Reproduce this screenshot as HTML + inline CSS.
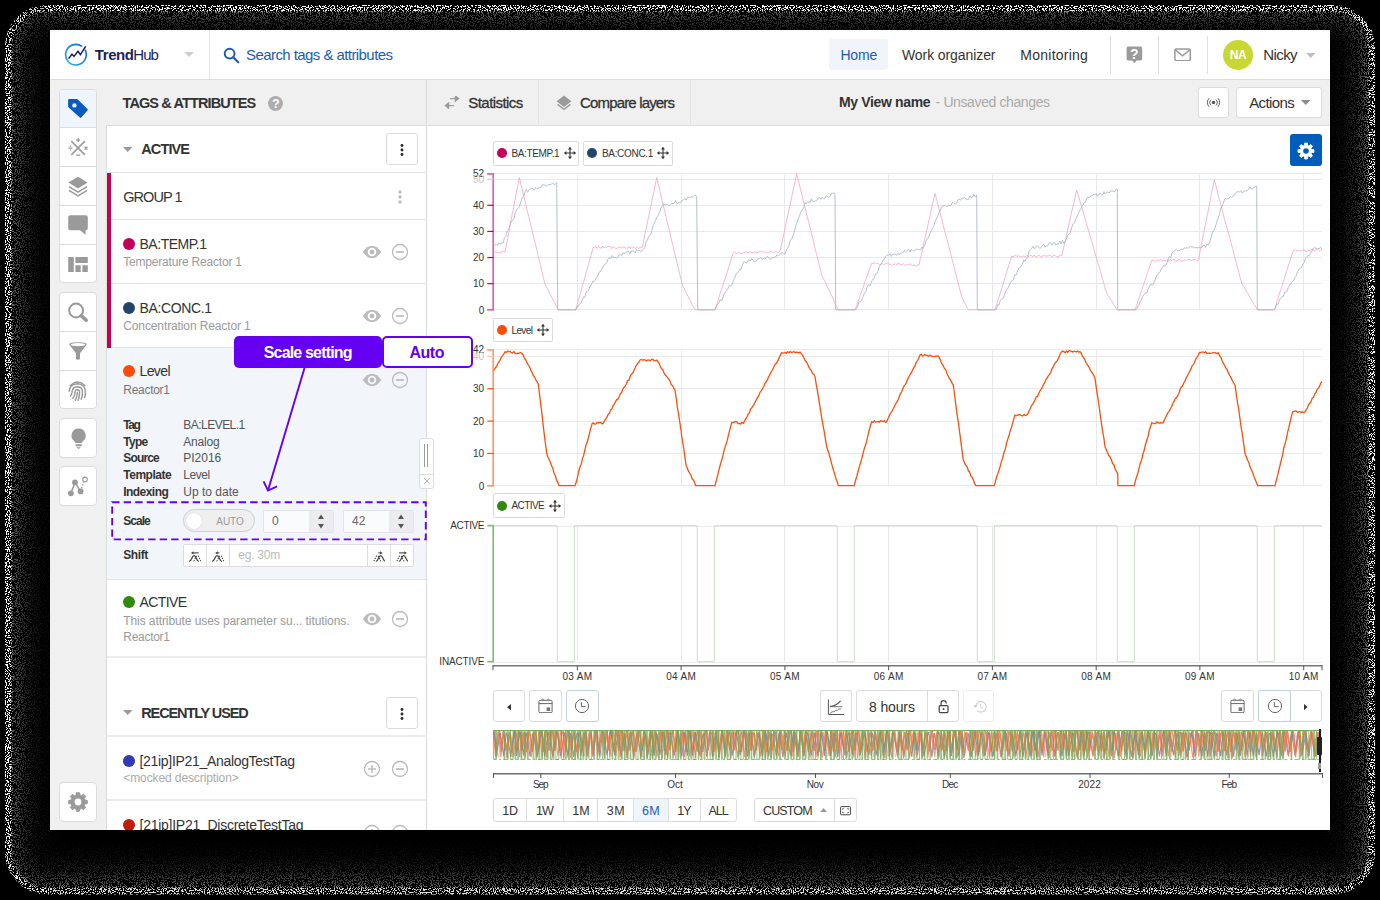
<!DOCTYPE html>
<html><head><meta charset="utf-8"><title>TrendHub</title>
<style>
*{box-sizing:border-box;margin:0;padding:0}
html,body{width:1380px;height:900px;overflow:hidden;background:#000}
body{font-family:"Liberation Sans",sans-serif;position:relative}
.a{position:absolute;display:block}
.t{position:absolute;white-space:nowrap;display:block}
#win{position:absolute;left:50px;top:30px;width:1280px;height:800px;background:#fff;overflow:hidden}
#o{position:absolute;left:-50px;top:-30px;width:1380px;height:900px}
</style></head>
<body>
<svg class="a" style="left:0;top:0" width="1380" height="900" viewBox="0 0 1380 900">
<defs>
<filter id="nz" x="0" y="0" width="1380" height="900" filterUnits="userSpaceOnUse" color-interpolation-filters="sRGB">
<feTurbulence type="fractalNoise" baseFrequency="0.93" numOctaves="1" seed="4" result="n"/>
<feColorMatrix in="n" type="matrix" values="0 0 0 0 1  0 0 0 0 1  0 0 0 0 1  1 0 0 0 0" result="na"/>
<feComposite in="na" in2="SourceGraphic" operator="arithmetic" k1="0" k2="40" k3="0" k4="-21.12" result="sp"/>
<feColorMatrix in="sp" type="matrix" values="0 0 0 0 1  0 0 0 0 1  0 0 0 0 1  0 0 0 1 0" result="spw"/>
<feComposite in="spw" in2="SourceGraphic" operator="in"/>
</filter>
</defs>
<g filter="url(#nz)"><rect x="5.5" y="5.5" width="1369.0" height="888.3" rx="41.5" ry="41.5" fill="none" stroke="#fff" stroke-width="1.15" stroke-opacity="1.000"/><rect x="6.5" y="6.5" width="1367.0" height="886.3" rx="40.5" ry="40.5" fill="none" stroke="#fff" stroke-width="1.15" stroke-opacity="1.000"/><rect x="7.5" y="7.5" width="1365.0" height="884.3" rx="39.5" ry="39.5" fill="none" stroke="#fff" stroke-width="1.15" stroke-opacity="1.000"/><rect x="8.5" y="8.5" width="1363.0" height="882.3" rx="38.5" ry="38.5" fill="none" stroke="#fff" stroke-width="1.15" stroke-opacity="1.000"/><rect x="9.5" y="9.5" width="1361.0" height="880.3" rx="37.5" ry="37.5" fill="none" stroke="#fff" stroke-width="1.15" stroke-opacity="1.000"/><rect x="10.5" y="10.5" width="1359.0" height="878.3" rx="36.5" ry="36.5" fill="none" stroke="#fff" stroke-width="1.15" stroke-opacity="1.000"/><rect x="11.5" y="11.5" width="1357.0" height="876.3" rx="35.5" ry="35.5" fill="none" stroke="#fff" stroke-width="1.15" stroke-opacity="0.600"/><rect x="12.5" y="12.5" width="1355.0" height="874.3" rx="34.5" ry="34.5" fill="none" stroke="#fff" stroke-width="1.15" stroke-opacity="0.420"/><rect x="13.5" y="13.5" width="1353.0" height="872.3" rx="33.5" ry="33.5" fill="none" stroke="#fff" stroke-width="1.15" stroke-opacity="0.326"/><rect x="14.5" y="14.5" width="1351.0" height="870.3" rx="32.5" ry="32.5" fill="none" stroke="#fff" stroke-width="1.15" stroke-opacity="0.303"/><rect x="15.5" y="15.5" width="1349.0" height="868.3" rx="31.5" ry="31.5" fill="none" stroke="#fff" stroke-width="1.15" stroke-opacity="0.282"/><rect x="16.5" y="16.5" width="1347.0" height="866.3" rx="30.5" ry="30.5" fill="none" stroke="#fff" stroke-width="1.15" stroke-opacity="0.263"/><rect x="17.5" y="17.5" width="1345.0" height="864.3" rx="29.5" ry="29.5" fill="none" stroke="#fff" stroke-width="1.15" stroke-opacity="0.245"/><rect x="18.5" y="18.5" width="1343.0" height="862.3" rx="28.5" ry="28.5" fill="none" stroke="#fff" stroke-width="1.15" stroke-opacity="0.228"/><rect x="19.5" y="19.5" width="1341.0" height="860.3" rx="27.5" ry="27.5" fill="none" stroke="#fff" stroke-width="1.15" stroke-opacity="0.212"/><rect x="20.5" y="20.5" width="1339.0" height="858.3" rx="26.5" ry="26.5" fill="none" stroke="#fff" stroke-width="1.15" stroke-opacity="0.198"/><rect x="21.5" y="21.5" width="1337.0" height="856.3" rx="25.5" ry="25.5" fill="none" stroke="#fff" stroke-width="1.15" stroke-opacity="0.184"/><rect x="22.5" y="22.5" width="1335.0" height="854.3" rx="24.5" ry="24.5" fill="none" stroke="#fff" stroke-width="1.15" stroke-opacity="0.171"/><rect x="23.5" y="23.5" width="1333.0" height="852.3" rx="23.5" ry="23.5" fill="none" stroke="#fff" stroke-width="1.15" stroke-opacity="0.160"/><rect x="24.5" y="24.5" width="1331.0" height="850.3" rx="22.5" ry="22.5" fill="none" stroke="#fff" stroke-width="1.15" stroke-opacity="0.149"/><rect x="25.5" y="25.5" width="1329.0" height="848.3" rx="21.5" ry="21.5" fill="none" stroke="#fff" stroke-width="1.15" stroke-opacity="0.138"/><rect x="26.5" y="26.5" width="1327.0" height="846.3" rx="20.5" ry="20.5" fill="none" stroke="#fff" stroke-width="1.15" stroke-opacity="0.129"/><rect x="27.5" y="27.5" width="1325.0" height="844.3" rx="19.5" ry="19.5" fill="none" stroke="#fff" stroke-width="1.15" stroke-opacity="0.120"/><rect x="28.5" y="28.5" width="1323.0" height="842.3" rx="18.5" ry="18.5" fill="none" stroke="#fff" stroke-width="1.15" stroke-opacity="0.112"/><rect x="29.5" y="29.5" width="1321.0" height="840.3" rx="17.5" ry="17.5" fill="none" stroke="#fff" stroke-width="1.15" stroke-opacity="0.104"/><rect x="30.5" y="30.5" width="1319.0" height="838.3" rx="16.5" ry="16.5" fill="none" stroke="#fff" stroke-width="1.15" stroke-opacity="0.097"/><rect x="31.5" y="31.5" width="1317.0" height="836.3" rx="15.5" ry="15.5" fill="none" stroke="#fff" stroke-width="1.15" stroke-opacity="0.090"/><rect x="32.5" y="32.5" width="1315.0" height="834.3" rx="14.5" ry="14.5" fill="none" stroke="#fff" stroke-width="1.15" stroke-opacity="0.084"/><rect x="33.5" y="33.5" width="1313.0" height="832.3" rx="13.5" ry="13.5" fill="none" stroke="#fff" stroke-width="1.15" stroke-opacity="0.078"/><rect x="34.5" y="34.5" width="1311.0" height="830.3" rx="12.5" ry="12.5" fill="none" stroke="#fff" stroke-width="1.15" stroke-opacity="0.073"/><rect x="35.5" y="35.5" width="1309.0" height="828.3" rx="11.5" ry="11.5" fill="none" stroke="#fff" stroke-width="1.15" stroke-opacity="0.068"/><rect x="36.5" y="36.5" width="1307.0" height="826.3" rx="10.5" ry="10.5" fill="none" stroke="#fff" stroke-width="1.15" stroke-opacity="0.063"/><rect x="37.5" y="37.5" width="1305.0" height="824.3" rx="9.5" ry="9.5" fill="none" stroke="#fff" stroke-width="1.15" stroke-opacity="0.059"/><rect x="38.5" y="38.5" width="1303.0" height="822.3" rx="8.5" ry="8.5" fill="none" stroke="#fff" stroke-width="1.15" stroke-opacity="0.055"/><rect x="39.5" y="39.5" width="1301.0" height="820.3" rx="7.5" ry="7.5" fill="none" stroke="#fff" stroke-width="1.15" stroke-opacity="0.051"/><rect x="40.5" y="40.5" width="1299.0" height="818.3" rx="6.5" ry="6.5" fill="none" stroke="#fff" stroke-width="1.15" stroke-opacity="0.047"/><rect x="41.5" y="41.5" width="1297.0" height="816.3" rx="5.5" ry="5.5" fill="none" stroke="#fff" stroke-width="1.15" stroke-opacity="0.044"/><rect x="42.5" y="42.5" width="1295.0" height="814.3" rx="4.5" ry="4.5" fill="none" stroke="#fff" stroke-width="1.15" stroke-opacity="0.041"/><rect x="43.5" y="43.5" width="1293.0" height="812.3" rx="3.5" ry="3.5" fill="none" stroke="#fff" stroke-width="1.15" stroke-opacity="0.038"/><rect x="44.5" y="44.5" width="1291.0" height="810.3" rx="2.5" ry="2.5" fill="none" stroke="#fff" stroke-width="1.15" stroke-opacity="0.036"/><rect x="45.5" y="45.5" width="1289.0" height="808.3" rx="1.5" ry="1.5" fill="none" stroke="#fff" stroke-width="1.15" stroke-opacity="0.033"/><rect x="46.5" y="46.5" width="1287.0" height="806.3" rx="0.5" ry="0.5" fill="none" stroke="#fff" stroke-width="1.15" stroke-opacity="0.031"/><rect x="47.5" y="47.5" width="1285.0" height="804.3" rx="0.5" ry="0.5" fill="none" stroke="#fff" stroke-width="1.15" stroke-opacity="0.029"/><rect x="48.5" y="48.5" width="1283.0" height="802.3" rx="0.5" ry="0.5" fill="none" stroke="#fff" stroke-width="1.15" stroke-opacity="0.027"/><rect x="49.5" y="49.5" width="1281.0" height="800.3" rx="0.5" ry="0.5" fill="none" stroke="#fff" stroke-width="1.15" stroke-opacity="0.025"/><rect x="50.5" y="50.5" width="1279.0" height="798.3" rx="0.5" ry="0.5" fill="none" stroke="#fff" stroke-width="1.15" stroke-opacity="0.023"/><rect x="51.5" y="51.5" width="1277.0" height="796.3" rx="0.5" ry="0.5" fill="none" stroke="#fff" stroke-width="1.15" stroke-opacity="0.022"/><rect x="52.5" y="52.5" width="1275.0" height="794.3" rx="0.5" ry="0.5" fill="none" stroke="#fff" stroke-width="1.15" stroke-opacity="0.020"/><rect x="53.5" y="53.5" width="1273.0" height="792.3" rx="0.5" ry="0.5" fill="none" stroke="#fff" stroke-width="1.15" stroke-opacity="0.019"/><rect x="54.5" y="54.5" width="1271.0" height="790.3" rx="0.5" ry="0.5" fill="none" stroke="#fff" stroke-width="1.15" stroke-opacity="0.016"/><rect x="55.5" y="55.5" width="1269.0" height="788.3" rx="0.5" ry="0.5" fill="none" stroke="#fff" stroke-width="1.15" stroke-opacity="0.014"/><rect x="56.5" y="56.5" width="1267.0" height="786.3" rx="0.5" ry="0.5" fill="none" stroke="#fff" stroke-width="1.15" stroke-opacity="0.011"/><rect x="57.5" y="57.5" width="1265.0" height="784.3" rx="0.5" ry="0.5" fill="none" stroke="#fff" stroke-width="1.15" stroke-opacity="0.009"/><rect x="58.5" y="58.5" width="1263.0" height="782.3" rx="0.5" ry="0.5" fill="none" stroke="#fff" stroke-width="1.15" stroke-opacity="0.008"/><rect x="59.5" y="59.5" width="1261.0" height="780.3" rx="0.5" ry="0.5" fill="none" stroke="#fff" stroke-width="1.15" stroke-opacity="0.006"/></g>
</svg>
<div id="win"><div id="o">
<div class="a" style="left:50px;top:80px;width:1280px;height:750px;background:#f0f0f0"></div>
<div class="a" style="left:427px;top:126px;width:903px;height:704px;background:#fff"></div>
<div class="a" style="left:427px;top:125px;width:903px;height:1px;background:#dcdcdc"></div>
<div class="a" style="left:426px;top:80px;width:1px;height:750px;background:#dcdcdc"></div>
<div class="a" style="left:538px;top:80px;width:1px;height:45px;background:#e4e4e4"></div>
<div class="a" style="left:690px;top:80px;width:1px;height:45px;background:#e4e4e4"></div>
<svg class="a" style="left:444px;top:96px;" width="16" height="13" viewBox="0 0 16 13"><path d="M6 2.6H14.2M11.4 0L14.6 2.6L11.4 5.2Z M1.8 9.6H10M4.6 7L1.4 9.6L4.6 12.2Z" fill="#9b9b9b" stroke="#9b9b9b" stroke-width="1.3"/></svg>
<span id="t1" class="t" style="left:468.30px;top:95.00px;font-size:15px;line-height:15px;font-weight:400;color:#333;letter-spacing:-0.557px;-webkit-text-stroke:0.3px #333;">Statistics</span>
<svg class="a" style="left:556px;top:94.5px;" width="16" height="16" viewBox="0 0 16 16"><path d="M8 0.5L15.4 6.2L8 11.9L0.6 6.2Z" fill="#9b9b9b"/><path d="M1.6 9.4L8 14.3L14.4 9.4" fill="none" stroke="#9b9b9b" stroke-width="1.4"/></svg>
<span id="t2" class="t" style="left:580.00px;top:95.00px;font-size:15px;line-height:15px;font-weight:400;color:#333;letter-spacing:-0.837px;-webkit-text-stroke:0.3px #333;">Compare layers</span>
<span id="t3" class="t" style="left:839.00px;top:95.00px;font-size:14px;line-height:14px;font-weight:700;color:#333;letter-spacing:-0.359px;">My View name</span>
<span id="t4" class="t" style="left:935.60px;top:95.00px;font-size:14px;line-height:14px;font-weight:400;color:#aaa;letter-spacing:-0.384px;">- Unsaved changes</span>
<div class="a" style="left:1198px;top:87px;width:31px;height:31px;background:#fff;border:1px solid #dcdcdc;border-radius:3px"></div>
<svg class="a" style="left:1206px;top:97px;" width="15" height="11" viewBox="0 0 15 11"><circle cx="7.5" cy="5.5" r="1.7" fill="#555"/><path d="M5 2.6A4 4 0 0 0 5 8.4M10 2.6A4 4 0 0 1 10 8.4M3.1 1.2A6.2 6.2 0 0 0 3.1 9.8M11.9 1.2A6.2 6.2 0 0 1 11.9 9.8" fill="none" stroke="#555" stroke-width="0.95"/></svg>
<div class="a" style="left:1236px;top:87px;width:86px;height:31px;background:#fff;border:1px solid #dcdcdc;border-radius:3px"></div>
<span id="t5" class="t" style="left:1249.20px;top:95.00px;font-size:15px;line-height:15px;font-weight:400;color:#333;letter-spacing:-0.617px;">Actions</span>
<svg class="a" style="left:1300.7px;top:100.3px;" width="9.5" height="5" viewBox="0 0 9.5 5"><path d="M0 0H9.5L4.75 5Z" fill="#8c8c8c"/></svg>
<div class="a" style="left:50px;top:30px;width:1280px;height:49px;background:#fff"></div>
<div class="a" style="left:50px;top:79px;width:1280px;height:1px;background:#dcdcdc"></div>
<div class="a" style="left:209px;top:30px;width:1px;height:49px;background:#e4e4e4"></div>
<svg class="a" style="left:64px;top:43px;" width="24" height="24" viewBox="0 0 24 24">
<defs><linearGradient id="lg" x1="1" y1="0" x2="0" y2="1"><stop offset="0" stop-color="#1565c0"/><stop offset="1" stop-color="#29b6e8"/></linearGradient></defs>
<path d="M17.6 3.1A10.3 10.3 0 1 0 21.2 7.2" fill="none" stroke="url(#lg)" stroke-width="1.7" stroke-linecap="round"/>
<path d="M4.6 15.6L8 11.2L10 13.4L14 8.2L16.4 11.6L21.6 3.4" fill="none" stroke="#1c1f5e" stroke-width="1.5" stroke-linejoin="miter"/></svg>
<span id="t6" class="t" style="left:94.80px;top:47.00px;font-size:15px;line-height:15px;font-weight:700;color:#1b1f5c;letter-spacing:-0.411px;">Trend</span>
<span id="t7" class="t" style="left:133.30px;top:47.00px;font-size:15px;line-height:15px;font-weight:400;color:#1b1f5c;letter-spacing:-0.966px;">Hub</span>
<svg class="a" style="left:184px;top:52px;" width="10" height="5" viewBox="0 0 10 5"><path d="M0 0H10L5 5Z" fill="#cfcfcf"/></svg>
<svg class="a" style="left:223px;top:47px;" width="17" height="17" viewBox="0 0 17 17"><circle cx="6.6" cy="6.6" r="4.9" fill="none" stroke="#1a5cb8" stroke-width="1.9"/><path d="M10.2 10.2L15.2 15.2" stroke="#1a5cb8" stroke-width="2.2" stroke-linecap="round"/></svg>
<span id="t8" class="t" style="left:246.00px;top:47.00px;font-size:15px;line-height:15px;font-weight:400;color:#1a5cb8;letter-spacing:-0.569px;">Search tags &amp; attributes</span>
<div class="a" style="left:829px;top:39px;width:59px;height:31px;background:#f1f5fb;border-radius:3px"></div>
<span id="t9" class="t" style="left:840.40px;top:48.00px;font-size:14px;line-height:14px;font-weight:400;color:#1a5cb8;letter-spacing:-0.186px;">Home</span>
<span id="t10" class="t" style="left:902.00px;top:48.00px;font-size:14px;line-height:14px;font-weight:400;color:#333;letter-spacing:-0.090px;">Work organizer</span>
<span id="t11" class="t" style="left:1020.30px;top:48.00px;font-size:14px;line-height:14px;font-weight:400;color:#333;letter-spacing:0.247px;">Monitoring</span>
<div class="a" style="left:1110px;top:36px;width:1px;height:38px;background:#dedede"></div>
<div class="a" style="left:1158px;top:36px;width:1px;height:38px;background:#dedede"></div>
<div class="a" style="left:1207px;top:36px;width:1px;height:38px;background:#dedede"></div>
<svg class="a" style="left:1126px;top:46px;" width="17" height="18" viewBox="0 0 17 18"><path d="M2.2 0.6H14.6Q16.2 0.6 16.2 2.2V12.8Q16.2 14.4 14.6 14.4H10.6L8.4 17.2L6.2 14.4H2.2Q0.6 14.4 0.6 12.8V2.2Q0.6 0.6 2.2 0.6Z" fill="#9b9b9b"/><text x="8.4" y="12.6" font-family="Liberation Sans" font-size="14" font-weight="700" text-anchor="middle" fill="#fff">?</text></svg>
<svg class="a" style="left:1174.4px;top:47.6px;" width="17.2" height="13.6" viewBox="0 0 17.2 13.6"><rect x="0.9" y="0.9" width="15.4" height="11.8" rx="1.4" fill="none" stroke="#9b9b9b" stroke-width="1.5"/><path d="M1.4 1.8L8.6 7.8L15.8 1.8" fill="none" stroke="#9b9b9b" stroke-width="1.5"/></svg>
<div class="a" style="left:1223px;top:39.5px;width:30px;height:30px;background:#c9d732;border-radius:50%"></div>
<span id="t12" class="t" style="left:1238.00px;transform:translateX(-50%);top:49.00px;font-size:12px;line-height:12px;font-weight:700;color:#fff;letter-spacing:-0.344px;">NA</span>
<span id="t13" class="t" style="left:1263.20px;top:47.00px;font-size:15px;line-height:15px;font-weight:400;color:#333;letter-spacing:-0.568px;">Nicky</span>
<svg class="a" style="left:1305.6px;top:52.5px;" width="9.5" height="5" viewBox="0 0 9.5 5"><path d="M0 0H9.5L4.75 5Z" fill="#bdbdbd"/></svg>
<div class="a" style="left:58.6px;top:88.6px;width:38.8px;height:194.8px;background:#fff;border:1px solid #dcdcdc;border-radius:4px"></div>
<div class="a" style="left:59.6px;top:89.6px;width:36.8px;height:37.6px;background:#f0f5fb;border-radius:3px 3px 0 0"></div>
<div class="a" style="left:59.6px;top:126.8px;width:36.8px;height:1px;background:#dcdcdc"></div>
<div class="a" style="left:59.6px;top:165.8px;width:36.8px;height:1px;background:#dcdcdc"></div>
<div class="a" style="left:59.6px;top:204.8px;width:36.8px;height:1px;background:#dcdcdc"></div>
<div class="a" style="left:59.6px;top:243.8px;width:36.8px;height:1px;background:#dcdcdc"></div>
<svg class="a" style="left:66px;top:96px;" width="24" height="24" viewBox="0 0 24 24"><path d="M3.2 2.9H10.6Q11.3 2.9 11.8 3.4L21.5 13.1Q22.2 13.8 21.5 14.5L15.2 21.6Q14.5 22.3 13.8 21.6L2.7 11.4Q2.1 10.9 2.1 10.2V4Q2.1 2.9 3.2 2.9Z" fill="#0a5bbd"/><circle cx="8.4" cy="9.4" r="2.2" fill="#f0f5fb"/></svg>
<svg class="a" style="left:66px;top:135px;" width="24" height="24" viewBox="0 0 24 24"><path d="M5.3 6.1L18.9 19.9M18.9 6.1L5.3 19.9" stroke="#9a9a9a" stroke-width="1.5"/><path d="M10.2 5.1H14.2M12.2 3.1V7.1M10.2 20.1H14.2M2.4 13.2H6.4M18.6 11.8L21.4 14.6M21.4 11.8L18.6 14.6" stroke="#9a9a9a" stroke-width="1.3"/><circle cx="4.4" cy="11.3" r="0.8" fill="#9a9a9a"/><circle cx="4.4" cy="15.1" r="0.7" fill="#9a9a9a"/></svg>
<svg class="a" style="left:68px;top:176px;" width="20" height="21" viewBox="0 0 20 21"><path d="M10 0.7L19.6 6.6L10 12.5L0.4 6.6Z" fill="#9a9a9a"/><path d="M1 10.6L10 16.1L19 10.6M1 14.4L10 19.9L19 14.4" fill="none" stroke="#9a9a9a" stroke-width="1.5"/></svg>
<svg class="a" style="left:68px;top:215px;" width="20" height="20" viewBox="0 0 20 20"><path d="M2.2 0.3H17.8Q19.8 0.3 19.8 2.3V13.3Q19.8 15.3 17.8 15.3H17.6V19.8L12 15.3H2.2Q0.2 15.3 0.2 13.3V2.3Q0.2 0.3 2.2 0.3Z" fill="#9a9a9a"/></svg>
<svg class="a" style="left:68px;top:257px;" width="20" height="15" viewBox="0 0 20 15"><path d="M0.2 0H5.8V15H0.2ZM7.4 0H19.8V6H7.4ZM7.4 8.3H12.7V15H7.4ZM14.4 8.3H19.8V15H14.4Z" fill="#9a9a9a"/></svg>
<div class="a" style="left:58.6px;top:292.2px;width:38.8px;height:117.2px;background:#fff;border:1px solid #dcdcdc;border-radius:4px"></div>
<div class="a" style="left:59.6px;top:330.8px;width:36.8px;height:1px;background:#dcdcdc"></div>
<div class="a" style="left:59.6px;top:369.8px;width:36.8px;height:1px;background:#dcdcdc"></div>
<svg class="a" style="left:66px;top:300px;" width="24" height="24" viewBox="0 0 24 24"><circle cx="10.1" cy="10.5" r="6.9" fill="none" stroke="#9a9a9a" stroke-width="2"/><path d="M15.2 15.6L20.2 20.3" stroke="#9a9a9a" stroke-width="3.6" stroke-linecap="round"/></svg>
<svg class="a" style="left:68px;top:341px;" width="20" height="20" viewBox="0 0 20 20"><path d="M1.2 3.6Q1.2 1.3 10 1.3Q18.8 1.3 18.8 3.6L12 12.3V17.6Q12 18.8 10 18.8Q8 18.8 8 17.6V12.3Z" fill="#9a9a9a"/><ellipse cx="10" cy="3.7" rx="7.2" ry="1.6" fill="#fff"/></svg>
<svg class="a" style="left:66.6px;top:379.2px;" width="21" height="23" viewBox="0 0 20 22"><g fill="none" stroke="#9a9a9a" stroke-width="1.4" stroke-linecap="round"><path d="M3.2 6.2Q10 -0.5 17 6" /><path d="M2 11.6Q2.6 5 10 4.6Q17.6 5 17.6 12.6Q17.6 15.6 16.8 17.6"/><path d="M3.4 16.4Q5.2 13.6 5 11.4Q5.4 7.6 10 7.4Q14.8 7.8 14.8 12.4Q14.8 16 13.6 19.4"/><path d="M5.6 18.6Q7.8 15 7.8 11.8Q8 10.2 10 10.2Q12 10.4 12 12.6Q12 17 10.6 20.4"/><path d="M8 20.2Q9.8 16.4 9.9 13"/></g></svg>
<div class="a" style="left:58.6px;top:418.2px;width:38.8px;height:39.6px;background:#fff;border:1px solid #dcdcdc;border-radius:4px"></div>
<svg class="a" style="left:68px;top:427px;" width="22" height="24" viewBox="0 0 22 24"><path d="M10.6 1.6A7 7 0 0 1 14.6 14.4Q13.9 15 13.9 15.9H7.3Q7.3 15 6.6 14.4A7 7 0 0 1 10.6 1.6Z" fill="#9a9a9a"/><path d="M7.5 17.2H13.7V19.2H7.5Z M8.3 20.2H12.9L10.6 21.9Z" fill="#9a9a9a"/></svg>
<div class="a" style="left:58.6px;top:466.2px;width:38.8px;height:39.6px;background:#fff;border:1px solid #dcdcdc;border-radius:4px"></div>
<svg class="a" style="left:66px;top:474px;" width="24" height="24" viewBox="0 0 24 24"><path d="M4.9 19.3L9 8.4L14.6 17.4" fill="none" stroke="#9a9a9a" stroke-width="1.5"/><path d="M15.6 14.4L18 8" stroke="#9a9a9a" stroke-width="1.3" stroke-dasharray="1.4 1.6"/><circle cx="9" cy="8.4" r="2.9" fill="#9a9a9a"/><circle cx="4.9" cy="19.3" r="2.9" fill="#9a9a9a"/><circle cx="14.6" cy="17.4" r="2.9" fill="#9a9a9a"/><circle cx="19" cy="5.4" r="2.3" fill="#fff" stroke="#9a9a9a" stroke-width="1.1"/></svg>
<div class="a" style="left:58.6px;top:782.3px;width:38.8px;height:39.4px;background:#fff;border:1px solid #dcdcdc;border-radius:4px"></div>
<svg class="a" style="left:66px;top:790.4px;" width="24" height="24" viewBox="0 0 24 24"><path d="M10.23 4.92L10.42 2.73L13.58 2.73L13.77 4.92L15.75 5.74L17.44 4.33L19.67 6.56L18.26 8.25L19.08 10.23L21.27 10.42L21.27 13.58L19.08 13.77L18.26 15.75L19.67 17.44L17.44 19.67L15.75 18.26L13.77 19.08L13.58 21.27L10.42 21.27L10.23 19.08L8.25 18.26L6.56 19.67L4.33 17.44L5.74 15.75L4.92 13.77L2.73 13.58L2.73 10.42L4.92 10.23L5.74 8.25L4.33 6.56L6.56 4.33L8.25 5.74Z" fill="#9a9a9a" stroke="#9a9a9a" stroke-width="1" stroke-linejoin="round"/><circle cx="12" cy="12" r="3.4" fill="#fff"/></svg>
<span id="t14" class="t" style="left:122.50px;top:96.00px;font-size:14.5px;line-height:15px;font-weight:700;color:#333;letter-spacing:-0.888px;">TAGS &amp; ATTRIBUTES</span>
<div class="a" style="left:268.4px;top:95.6px;width:15px;height:15px;background:#adadad;border-radius:50%"></div>
<span id="t15" class="t" style="left:275.90px;transform:translateX(-50%);top:98.00px;font-size:12.5px;line-height:13px;font-weight:700;color:#fff;">?</span>
<div class="a" style="left:106px;top:125px;width:320px;height:706px;background:#fff;border-left:1px solid #dcdcdc;border-top:1px solid #dcdcdc"></div>
<svg class="a" style="left:123.2px;top:146.6px;" width="9.5" height="5" viewBox="0 0 9.5 5"><path d="M0 0H9.5L4.75 5Z" fill="#9a9a9a"/></svg>
<span id="t16" class="t" style="left:141.25px;top:142.00px;font-size:14.5px;line-height:15px;font-weight:700;color:#333;letter-spacing:-0.884px;">ACTIVE</span>
<div class="a" style="left:386px;top:133px;width:32px;height:32px;background:#fff;border:1px solid #dcdcdc;border-radius:3px"></div>
<svg class="a" style="left:399px;top:142px;" width="6" height="16" viewBox="0 0 6 16"><circle cx="3" cy="3.5" r="1.45" fill="#2b2b2b"/><circle cx="3" cy="8" r="1.45" fill="#2b2b2b"/><circle cx="3" cy="12.5" r="1.45" fill="#2b2b2b"/></svg>
<div class="a" style="left:107px;top:172px;width:319px;height:1px;background:#e3e3e3"></div>
<div class="a" style="left:107px;top:173px;width:4px;height:175px;background:#c4005a"></div>
<span id="t17" class="t" style="left:123.25px;top:190.00px;font-size:14.5px;line-height:15px;font-weight:400;color:#333;letter-spacing:-0.961px;">GROUP 1</span>
<svg class="a" style="left:397px;top:189px;" width="6" height="16" viewBox="0 0 6 16"><circle cx="3" cy="3" r="1.7" fill="#bdbdbd"/><circle cx="3" cy="8" r="1.7" fill="#bdbdbd"/><circle cx="3" cy="13" r="1.7" fill="#bdbdbd"/></svg>
<div class="a" style="left:111px;top:219px;width:315px;height:1px;background:#e3e3e3"></div>
<div class="a" style="left:122.75px;top:237.75px;width:12px;height:12px;background:#c4005a;border-radius:50%"></div>
<span id="t18" class="t" style="left:139.50px;top:237.00px;font-size:14px;line-height:14px;font-weight:400;color:#333;letter-spacing:-0.479px;">BA:TEMP.1</span>
<span id="t19" class="t" style="left:123.25px;top:256.00px;font-size:12px;line-height:12px;font-weight:400;color:#9a9a9a;letter-spacing:-0.199px;">Temperature Reactor 1</span>
<svg class="a" style="left:362px;top:245px;" width="20" height="14" viewBox="0 0 20 14"><path d="M0.8 7Q5 0.8 10 0.8Q15 0.8 19.2 7Q15 13.2 10 13.2Q5 13.2 0.8 7Z" fill="#bcbcbc"/><circle cx="10" cy="7" r="4.3" fill="#fff"/><circle cx="10" cy="7" r="2.4" fill="#bcbcbc"/></svg>
<svg class="a" style="left:390px;top:242px;" width="20" height="20" viewBox="0 0 20 20"><circle cx="10" cy="10" r="7.5" fill="none" stroke="#bcbcbc" stroke-width="1.3"/><path d="M6 10H14" stroke="#bcbcbc" stroke-width="1.7"/></svg>
<div class="a" style="left:111px;top:283px;width:315px;height:1px;background:#e3e3e3"></div>
<div class="a" style="left:122.75px;top:301.5px;width:12px;height:12px;background:#23456b;border-radius:50%"></div>
<span id="t20" class="t" style="left:139.50px;top:301.00px;font-size:14px;line-height:14px;font-weight:400;color:#333;letter-spacing:-0.371px;">BA:CONC.1</span>
<span id="t21" class="t" style="left:123.25px;top:320.00px;font-size:12px;line-height:12px;font-weight:400;color:#9a9a9a;letter-spacing:-0.117px;">Concentration Reactor 1</span>
<svg class="a" style="left:362px;top:309px;" width="20" height="14" viewBox="0 0 20 14"><path d="M0.8 7Q5 0.8 10 0.8Q15 0.8 19.2 7Q15 13.2 10 13.2Q5 13.2 0.8 7Z" fill="#bcbcbc"/><circle cx="10" cy="7" r="4.3" fill="#fff"/><circle cx="10" cy="7" r="2.4" fill="#bcbcbc"/></svg>
<svg class="a" style="left:390px;top:306px;" width="20" height="20" viewBox="0 0 20 20"><circle cx="10" cy="10" r="7.5" fill="none" stroke="#bcbcbc" stroke-width="1.3"/><path d="M6 10H14" stroke="#bcbcbc" stroke-width="1.7"/></svg>
<div class="a" style="left:111px;top:347px;width:315px;height:1px;background:#e3e3e3"></div>
<div class="a" style="left:107px;top:348px;width:319px;height:231px;background:#f2f5fa"></div>
<div class="a" style="left:122.75px;top:365.25px;width:12px;height:12px;background:#ff4b05;border-radius:50%"></div>
<span id="t22" class="t" style="left:139.50px;top:364.00px;font-size:14px;line-height:14px;font-weight:400;color:#333;letter-spacing:-0.617px;">Level</span>
<span id="t23" class="t" style="left:123.25px;top:384.00px;font-size:12px;line-height:12px;font-weight:400;color:#777;letter-spacing:-0.279px;">Reactor1</span>
<svg class="a" style="left:362px;top:373px;" width="20" height="14" viewBox="0 0 20 14"><path d="M0.8 7Q5 0.8 10 0.8Q15 0.8 19.2 7Q15 13.2 10 13.2Q5 13.2 0.8 7Z" fill="#bcbcbc"/><circle cx="10" cy="7" r="4.3" fill="#f2f5fa"/><circle cx="10" cy="7" r="2.4" fill="#bcbcbc"/></svg>
<svg class="a" style="left:390px;top:370px;" width="20" height="20" viewBox="0 0 20 20"><circle cx="10" cy="10" r="7.5" fill="none" stroke="#bcbcbc" stroke-width="1.3"/><path d="M6 10H14" stroke="#bcbcbc" stroke-width="1.7"/></svg>
<span id="t24" class="t" style="left:123.25px;top:419.00px;font-size:12px;line-height:12px;font-weight:700;color:#333;letter-spacing:-1.477px;">Tag</span>
<span id="t25" class="t" style="left:183.25px;top:419.00px;font-size:12px;line-height:12px;font-weight:400;color:#555;letter-spacing:-0.524px;">BA:LEVEL.1</span>
<span id="t26" class="t" style="left:123.25px;top:436.00px;font-size:12px;line-height:12px;font-weight:700;color:#333;letter-spacing:-0.708px;">Type</span>
<span id="t27" class="t" style="left:183.25px;top:436.00px;font-size:12px;line-height:12px;font-weight:400;color:#555;letter-spacing:-0.175px;">Analog</span>
<span id="t28" class="t" style="left:123.25px;top:452.00px;font-size:12px;line-height:12px;font-weight:700;color:#333;letter-spacing:-0.838px;">Source</span>
<span id="t29" class="t" style="left:183.25px;top:452.00px;font-size:12px;line-height:12px;font-weight:400;color:#555;letter-spacing:-0.009px;">PI2016</span>
<span id="t30" class="t" style="left:123.25px;top:469.00px;font-size:12px;line-height:12px;font-weight:700;color:#333;letter-spacing:-0.471px;">Template</span>
<span id="t31" class="t" style="left:183.25px;top:469.00px;font-size:12px;line-height:12px;font-weight:400;color:#555;letter-spacing:-0.422px;">Level</span>
<span id="t32" class="t" style="left:123.25px;top:486.00px;font-size:12px;line-height:12px;font-weight:700;color:#333;letter-spacing:-0.549px;">Indexing</span>
<span id="t33" class="t" style="left:183.25px;top:486.00px;font-size:12px;line-height:12px;font-weight:400;color:#555;letter-spacing:0.014px;">Up to date</span>
<span id="t34" class="t" style="left:123.25px;top:515.00px;font-size:12px;line-height:12px;font-weight:700;color:#333;letter-spacing:-0.965px;">Scale</span>
<div class="a" style="left:183px;top:509.3px;width:72px;height:22.6px;background:#efefef;border:1px solid #cfcfcf;border-radius:11.3px"></div>
<div class="a" style="left:185.8px;top:512.6px;width:16.6px;height:16.6px;background:#fff;border-radius:50%;box-shadow:0 0 1px rgba(0,0,0,.25)"></div>
<span id="t35" class="t" style="left:216.25px;top:517.00px;font-size:10px;line-height:10px;font-weight:400;color:#999;letter-spacing:-0.036px;">AUTO</span>
<div class="a" style="left:263px;top:509.5px;width:71px;height:23px;background:#fafbfd;border:1px solid #e2e4e8;border-radius:2px"></div>
<div class="a" style="left:309px;top:510.5px;width:24px;height:21px;background:#ececee"></div>
<span id="t36" class="t" style="left:272.00px;top:515.00px;font-size:12px;line-height:12px;font-weight:400;color:#666;letter-spacing:0.000px;">0</span>
<svg class="a" style="left:318px;top:513.5px;" width="6" height="15" viewBox="0 0 6 15"><path d="M0 5L3 0.6L6 5ZM0 10L3 14.4L6 10Z" fill="#555"/></svg>
<div class="a" style="left:343px;top:509.5px;width:71px;height:23px;background:#fafbfd;border:1px solid #e2e4e8;border-radius:2px"></div>
<div class="a" style="left:389px;top:510.5px;width:24px;height:21px;background:#ececee"></div>
<span id="t37" class="t" style="left:352.00px;top:515.00px;font-size:12px;line-height:12px;font-weight:400;color:#666;letter-spacing:0.141px;">42</span>
<svg class="a" style="left:398px;top:513.5px;" width="6" height="15" viewBox="0 0 6 15"><path d="M0 5L3 0.6L6 5ZM0 10L3 14.4L6 10Z" fill="#555"/></svg>
<span id="t38" class="t" style="left:123.25px;top:549.00px;font-size:12px;line-height:12px;font-weight:700;color:#333;letter-spacing:-0.418px;">Shift</span>
<div class="a" style="left:183px;top:544px;width:231px;height:23px;background:#fff;border:1px solid #dcdcdc;border-radius:2px"></div>
<div class="a" style="left:206px;top:545px;width:1px;height:21px;background:#dcdcdc"></div>
<div class="a" style="left:229px;top:545px;width:1px;height:21px;background:#dcdcdc"></div>
<div class="a" style="left:367px;top:545px;width:1px;height:21px;background:#dcdcdc"></div>
<div class="a" style="left:390px;top:545px;width:1px;height:21px;background:#dcdcdc"></div>
<span id="t39" class="t" style="left:238.25px;top:549.00px;font-size:12px;line-height:12px;font-weight:400;color:#bbb;letter-spacing:-0.227px;">eg. 30m</span>
<svg class="a" style="left:188.6px;top:550.6px;" width="12.8" height="11" viewBox="0 0 12.8 11"><path d="M0.4 10.2C2.6 10.2 2.9 4.6 5.1 4.6C7.3 4.6 7.6 10.2 9.4 10.2" fill="none" stroke="#444" stroke-width="1.25" stroke-linecap="round"/><path d="M4.6 10.2C6 9.4 6.6 4.8 8.5 4.8C10.4 4.8 10.9 10.2 12.4 10.2" fill="none" stroke="#444" stroke-width="1.05" stroke-dasharray="1.3 1.1"/><path d="M3.4 1.9H9.8" stroke="#444" stroke-width="1.1"/><path d="M1.9 1.9L4.5 0.3V3.5Z" fill="#444"/></svg>
<svg class="a" style="left:211.6px;top:550.6px;" width="12.8" height="11" viewBox="0 0 12.8 11"><path d="M0.4 10.2C2.6 10.2 2.9 4.6 5.1 4.6C7.3 4.6 7.6 10.2 9.4 10.2" fill="none" stroke="#444" stroke-width="1.25" stroke-linecap="round"/><path d="M4.6 10.2C6 9.4 6.6 4.8 8.5 4.8C10.4 4.8 10.9 10.2 12.4 10.2" fill="none" stroke="#444" stroke-width="1.05" stroke-dasharray="1.3 1.1"/><path d="M4.8 1.9H7.4" stroke="#444" stroke-width="1.1"/><path d="M3.2 1.9L5.6 0.3V3.5Z" fill="#444"/></svg>
<svg class="a" style="left:372.6px;top:550.6px;" width="12.8" height="11" viewBox="0 0 12.8 11"><g transform="translate(12.8,0) scale(-1,1)"><path d="M0.4 10.2C2.6 10.2 2.9 4.6 5.1 4.6C7.3 4.6 7.6 10.2 9.4 10.2" fill="none" stroke="#444" stroke-width="1.25" stroke-linecap="round"/><path d="M4.6 10.2C6 9.4 6.6 4.8 8.5 4.8C10.4 4.8 10.9 10.2 12.4 10.2" fill="none" stroke="#444" stroke-width="1.05" stroke-dasharray="1.3 1.1"/><path d="M4.8 1.9H7.4" stroke="#444" stroke-width="1.1"/><path d="M3.2 1.9L5.6 0.3V3.5Z" fill="#444"/></g></svg>
<svg class="a" style="left:395.6px;top:550.6px;" width="12.8" height="11" viewBox="0 0 12.8 11"><g transform="translate(12.8,0) scale(-1,1)"><path d="M0.4 10.2C2.6 10.2 2.9 4.6 5.1 4.6C7.3 4.6 7.6 10.2 9.4 10.2" fill="none" stroke="#444" stroke-width="1.25" stroke-linecap="round"/><path d="M4.6 10.2C6 9.4 6.6 4.8 8.5 4.8C10.4 4.8 10.9 10.2 12.4 10.2" fill="none" stroke="#444" stroke-width="1.05" stroke-dasharray="1.3 1.1"/><path d="M3.4 1.9H9.8" stroke="#444" stroke-width="1.1"/><path d="M1.9 1.9L4.5 0.3V3.5Z" fill="#444"/></g></svg>
<div class="a" style="left:107px;top:579px;width:319px;height:1px;background:#e3e3e3"></div>
<div class="a" style="left:122.75px;top:596px;width:12px;height:12px;background:#2f8a0e;border-radius:50%"></div>
<span id="t40" class="t" style="left:139.50px;top:595.00px;font-size:14px;line-height:14px;font-weight:400;color:#333;letter-spacing:-0.616px;">ACTIVE</span>
<span id="t41" class="t" style="left:123.25px;top:615.00px;font-size:12px;line-height:12px;font-weight:400;color:#9a9a9a;letter-spacing:-0.086px;">This attribute uses parameter su... titutions.</span>
<span id="t42" class="t" style="left:123.25px;top:631.00px;font-size:12px;line-height:12px;font-weight:400;color:#9a9a9a;letter-spacing:-0.279px;">Reactor1</span>
<svg class="a" style="left:362px;top:611.8px;" width="20" height="14" viewBox="0 0 20 14"><path d="M0.8 7Q5 0.8 10 0.8Q15 0.8 19.2 7Q15 13.2 10 13.2Q5 13.2 0.8 7Z" fill="#bcbcbc"/><circle cx="10" cy="7" r="4.3" fill="#fff"/><circle cx="10" cy="7" r="2.4" fill="#bcbcbc"/></svg>
<svg class="a" style="left:390px;top:608.8px;" width="20" height="20" viewBox="0 0 20 20"><circle cx="10" cy="10" r="7.5" fill="none" stroke="#bcbcbc" stroke-width="1.3"/><path d="M6 10H14" stroke="#bcbcbc" stroke-width="1.7"/></svg>
<div class="a" style="left:107px;top:656px;width:319px;height:2px;background:#ececec"></div>
<svg class="a" style="left:123.2px;top:710px;" width="9.5" height="5" viewBox="0 0 9.5 5"><path d="M0 0H9.5L4.75 5Z" fill="#9a9a9a"/></svg>
<span id="t43" class="t" style="left:141.25px;top:706.00px;font-size:14.5px;line-height:15px;font-weight:700;color:#333;letter-spacing:-1.115px;">RECENTLY USED</span>
<div class="a" style="left:386px;top:697px;width:32px;height:32px;background:#fff;border:1px solid #dcdcdc;border-radius:3px"></div>
<svg class="a" style="left:399px;top:705.6px;" width="6" height="16" viewBox="0 0 6 16"><circle cx="3" cy="3.5" r="1.45" fill="#2b2b2b"/><circle cx="3" cy="8" r="1.45" fill="#2b2b2b"/><circle cx="3" cy="12.5" r="1.45" fill="#2b2b2b"/></svg>
<div class="a" style="left:107px;top:735px;width:319px;height:2px;background:#ececec"></div>
<div class="a" style="left:122.75px;top:754.5px;width:12px;height:12px;background:#3338b5;border-radius:50%"></div>
<span id="t44" class="t" style="left:139.50px;top:754.00px;font-size:14px;line-height:14px;font-weight:400;color:#333;letter-spacing:-0.312px;">[21ip]IP21_AnalogTestTag</span>
<span id="t45" class="t" style="left:123.25px;top:772.00px;font-size:12px;line-height:12px;font-weight:400;color:#aaa;letter-spacing:-0.100px;">&lt;mocked description&gt;</span>
<svg class="a" style="left:362px;top:758.8px;" width="20" height="20" viewBox="0 0 20 20"><circle cx="10" cy="10" r="7.5" fill="none" stroke="#bcbcbc" stroke-width="1.3"/><path d="M6 10H14M10 6V14" stroke="#bcbcbc" stroke-width="1.5"/></svg>
<svg class="a" style="left:390px;top:758.8px;" width="20" height="20" viewBox="0 0 20 20"><circle cx="10" cy="10" r="7.5" fill="none" stroke="#bcbcbc" stroke-width="1.3"/><path d="M6 10H14" stroke="#bcbcbc" stroke-width="1.7"/></svg>
<div class="a" style="left:107px;top:799px;width:319px;height:1.6px;background:#e9e9e9"></div>
<div class="a" style="left:122.75px;top:818.5px;width:12px;height:12px;background:#c01c08;border-radius:50%"></div>
<span id="t46" class="t" style="left:139.50px;top:818.00px;font-size:14px;line-height:14px;font-weight:400;color:#333;letter-spacing:-0.258px;">[21ip]IP21_DiscreteTestTag</span>
<svg class="a" style="left:362px;top:822.8px;" width="20" height="20" viewBox="0 0 20 20"><circle cx="10" cy="10" r="7.5" fill="none" stroke="#bcbcbc" stroke-width="1.3"/><path d="M6 10H14M10 6V14" stroke="#bcbcbc" stroke-width="1.5"/></svg>
<svg class="a" style="left:390px;top:822.8px;" width="20" height="20" viewBox="0 0 20 20"><circle cx="10" cy="10" r="7.5" fill="none" stroke="#bcbcbc" stroke-width="1.3"/><path d="M6 10H14" stroke="#bcbcbc" stroke-width="1.7"/></svg>
<div class="a" style="left:419px;top:437.5px;width:15px;height:51px;background:#fff;border:1px solid #dcdcdc;border-radius:3px"></div>
<div class="a" style="left:420px;top:473.5px;width:13px;height:1px;background:#dcdcdc"></div>
<div class="a" style="left:424.3px;top:444px;width:1px;height:23px;background:#9a9a9a"></div>
<div class="a" style="left:427.3px;top:444px;width:1px;height:23px;background:#9a9a9a"></div>
<svg class="a" style="left:422.5px;top:477px;" width="8" height="8" viewBox="0 0 8 8"><path d="M1.2 1.2L6.8 6.8M6.8 1.2L1.2 6.8" stroke="#aaa" stroke-width="0.9"/></svg>
<div class="a" style="left:1290px;top:134px;width:32px;height:32px;background:#025cba;border-radius:3px"></div>
<svg class="a" style="left:1295px;top:140px;" width="22" height="22" viewBox="0 0 22 22"><path d="M9.62 5.47L9.66 3.11L12.34 3.11L12.38 5.47L13.93 6.11L15.63 4.47L17.53 6.37L15.89 8.07L16.53 9.62L18.89 9.66L18.89 12.34L16.53 12.38L15.89 13.93L17.53 15.63L15.63 17.53L13.93 15.89L12.38 16.53L12.34 18.89L9.66 18.89L9.62 16.53L8.07 15.89L6.37 17.53L4.47 15.63L6.11 13.93L5.47 12.38L3.11 12.34L3.11 9.66L5.47 9.62L6.11 8.07L4.47 6.37L6.37 4.47L8.07 6.11Z" fill="#fff" stroke="#fff" stroke-width="1" stroke-linejoin="round"/><circle cx="11" cy="11" r="2.8" fill="#025cba"/></svg>
<div class="a" style="left:492.7px;top:141.2px;width:86.8px;height:24.5px;background:#fff;border:1px solid #dcdcdc;border-radius:2px"></div><div class="a" style="left:496.9px;top:148.45px;width:10px;height:10px;background:#c4005a;border-radius:50%"></div><span id="t47" class="t" style="left:511.40px;top:149.00px;font-size:10px;line-height:10px;font-weight:400;color:#333;letter-spacing:-0.338px;">BA:TEMP.1</span><svg class="a" style="left:563.7px;top:147.45px;" width="12" height="12" viewBox="0 0 12 12"><path d="M6 0.6V11.4M0.6 6H11.4" stroke="#333" stroke-width="1.1"/><path d="M6 0L8 2.4H4ZM6 12L8 9.6H4ZM0 6L2.4 4V8ZM12 6L9.6 4V8Z" fill="#333"/></svg>
<div class="a" style="left:583.2px;top:141.2px;width:89.8px;height:24.5px;background:#fff;border:1px solid #dcdcdc;border-radius:2px"></div><div class="a" style="left:587.4px;top:148.45px;width:10px;height:10px;background:#23456b;border-radius:50%"></div><span id="t48" class="t" style="left:601.90px;top:149.00px;font-size:10px;line-height:10px;font-weight:400;color:#333;letter-spacing:-0.301px;">BA:CONC.1</span><svg class="a" style="left:657.2px;top:147.45px;" width="12" height="12" viewBox="0 0 12 12"><path d="M6 0.6V11.4M0.6 6H11.4" stroke="#333" stroke-width="1.1"/><path d="M6 0L8 2.4H4ZM6 12L8 9.6H4ZM0 6L2.4 4V8ZM12 6L9.6 4V8Z" fill="#333"/></svg>
<div class="a" style="left:492.7px;top:317.5px;width:60px;height:24.5px;background:#fff;border:1px solid #dcdcdc;border-radius:2px"></div><div class="a" style="left:496.9px;top:324.75px;width:10px;height:10px;background:#ff4b05;border-radius:50%"></div><span id="t49" class="t" style="left:511.40px;top:326.00px;font-size:10px;line-height:10px;font-weight:400;color:#333;letter-spacing:-0.577px;">Level</span><svg class="a" style="left:536.9px;top:323.75px;" width="12" height="12" viewBox="0 0 12 12"><path d="M6 0.6V11.4M0.6 6H11.4" stroke="#333" stroke-width="1.1"/><path d="M6 0L8 2.4H4ZM6 12L8 9.6H4ZM0 6L2.4 4V8ZM12 6L9.6 4V8Z" fill="#333"/></svg>
<div class="a" style="left:492.7px;top:493.3px;width:72.3px;height:24.5px;background:#fff;border:1px solid #dcdcdc;border-radius:2px"></div><div class="a" style="left:496.9px;top:500.55px;width:10px;height:10px;background:#2f8a0e;border-radius:50%"></div><span id="t50" class="t" style="left:511.40px;top:501.00px;font-size:10px;line-height:10px;font-weight:400;color:#333;letter-spacing:-0.565px;">ACTIVE</span><svg class="a" style="left:549.2px;top:499.55px;" width="12" height="12" viewBox="0 0 12 12"><path d="M6 0.6V11.4M0.6 6H11.4" stroke="#333" stroke-width="1.1"/><path d="M6 0L8 2.4H4ZM6 12L8 9.6H4ZM0 6L2.4 4V8ZM12 6L9.6 4V8Z" fill="#333"/></svg>
<svg class="a" style="left:0;top:0" width="1380" height="900" viewBox="0 0 1380 900"><path d="M493 309.50H1322" stroke="#e9e9e9" stroke-width="1"/><path d="M493 283.50H1322" stroke="#e9e9e9" stroke-width="1"/><path d="M493 257.50H1322" stroke="#e9e9e9" stroke-width="1"/><path d="M493 231.50H1322" stroke="#e9e9e9" stroke-width="1"/><path d="M493 205.50H1322" stroke="#e9e9e9" stroke-width="1"/><path d="M493 179.50H1322" stroke="#e9e9e9" stroke-width="1"/><path d="M493 173.50H1322" stroke="#e9e9e9" stroke-width="1"/><path d="M577.5 173.924V309.8" stroke="#e9e9e9" stroke-width="1"/><path d="M681.5 173.924V309.8" stroke="#e9e9e9" stroke-width="1"/><path d="M784.5 173.924V309.8" stroke="#e9e9e9" stroke-width="1"/><path d="M888.5 173.924V309.8" stroke="#e9e9e9" stroke-width="1"/><path d="M992.5 173.924V309.8" stroke="#e9e9e9" stroke-width="1"/><path d="M1096.5 173.924V309.8" stroke="#e9e9e9" stroke-width="1"/><path d="M1199.5 173.924V309.8" stroke="#e9e9e9" stroke-width="1"/><path d="M1303.5 173.924V309.8" stroke="#e9e9e9" stroke-width="1"/><polyline points="493.0,251.7 494.3,252.0 495.7,252.3 497.0,252.5 498.3,252.9 499.7,252.4 501.0,252.9 502.3,250.8 503.7,251.9 505.0,252.0 506.4,244.9 507.9,237.2 509.3,230.0 510.7,222.0 512.1,214.8 513.6,207.2 515.0,200.0 516.4,192.6 517.9,184.8 519.3,177.7 520.7,183.1 522.0,188.7 523.4,194.8 524.7,200.3 526.1,205.4 527.4,211.5 528.8,216.6 530.1,222.5 531.5,227.8 532.8,233.3 534.2,239.5 535.5,244.6 536.9,250.2 538.2,256.4 539.6,261.9 540.9,267.1 542.3,273.1 543.6,278.4 545.0,284.0 546.3,286.7 547.7,289.0 549.0,292.1 550.3,294.5 551.6,297.3 553.0,299.9 554.3,302.1 555.6,304.7 557.0,307.2 558.3,309.8 559.6,309.8 561.0,309.8 562.3,309.8 563.7,309.8 565.0,309.8 566.3,309.8 567.7,309.8 569.0,309.8 570.3,309.8 571.7,309.8 573.0,309.8 574.4,309.8 575.7,309.8 577.1,304.9 578.4,300.0 579.8,295.4 581.1,290.8 582.5,285.5 583.8,281.2 585.2,276.1 586.5,271.3 587.9,266.8 589.2,261.8 590.6,256.8 591.9,252.1 593.3,247.3 594.6,247.8 595.9,246.2 597.3,248.5 598.6,246.2 599.9,247.9 601.2,248.2 602.6,246.2 603.9,248.0 605.2,247.0 606.5,247.5 607.9,246.2 609.2,246.3 610.5,246.6 611.8,248.5 613.2,246.7 614.5,248.0 615.8,248.4 617.1,248.5 618.5,247.0 619.8,247.1 621.1,247.5 622.4,248.1 623.8,246.5 625.1,248.0 626.4,248.1 627.7,248.3 629.1,246.3 630.4,248.5 631.7,246.5 633.0,247.1 634.4,247.7 635.7,248.5 637.0,247.1 638.3,248.5 639.7,247.6 641.0,247.0 642.3,247.5 643.6,241.0 644.9,234.6 646.2,228.2 647.5,221.9 648.8,215.9 650.2,209.8 651.5,202.8 652.8,196.4 654.1,190.7 655.4,184.1 656.7,177.7 658.0,183.3 659.4,188.8 660.7,194.7 662.1,200.5 663.4,205.9 664.8,211.5 666.1,216.9 667.5,223.2 668.8,228.2 670.2,234.2 671.5,240.1 672.9,245.2 674.2,251.3 675.6,257.1 676.9,262.5 678.3,268.3 679.6,273.4 681.0,279.3 682.3,285.0 683.7,287.5 685.1,290.8 686.5,293.2 687.9,296.1 689.4,299.2 690.8,301.9 692.2,304.8 693.6,307.2 695.0,309.8 696.3,309.8 697.7,309.8 699.0,309.8 700.3,309.8 701.7,309.8 703.0,309.8 704.3,309.8 705.7,309.8 707.0,309.8 708.3,309.8 709.7,309.8 711.0,309.8 712.3,309.8 713.7,309.8 715.0,309.8 716.3,305.9 717.6,302.0 718.9,297.7 720.2,293.5 721.5,289.5 722.8,285.2 724.1,281.3 725.5,277.6 726.8,273.5 728.1,269.2 729.4,265.0 730.7,260.8 732.0,256.5 733.3,252.7 734.6,252.1 736.0,253.3 737.3,253.5 738.6,252.2 740.0,253.2 741.3,253.2 742.6,252.9 744.0,252.8 745.3,253.0 746.6,252.0 748.0,252.8 749.3,251.8 750.6,252.2 752.0,252.9 753.3,252.6 754.6,251.7 756.0,253.2 757.3,252.4 758.7,252.2 760.0,250.8 761.3,252.1 762.7,251.3 764.0,252.3 765.3,251.8 766.7,252.6 768.0,252.2 769.3,252.5 770.7,251.4 772.0,252.1 773.3,252.2 774.7,252.4 776.0,251.2 777.3,252.4 778.7,252.4 780.0,251.5 781.4,245.1 782.8,238.9 784.2,232.4 785.6,225.5 787.0,219.1 788.4,212.3 789.7,206.3 791.1,199.9 792.5,193.1 793.9,186.7 795.3,180.2 796.7,173.6 798.0,179.1 799.3,184.0 800.6,189.8 802.0,195.0 803.3,200.4 804.6,205.6 805.9,211.0 807.2,216.5 808.5,221.7 809.9,227.1 811.2,232.0 812.5,237.4 813.8,242.9 815.1,248.4 816.4,253.5 817.8,259.1 819.1,264.4 820.4,269.3 821.7,275.0 823.1,277.9 824.5,280.6 825.9,283.4 827.2,286.4 828.6,289.5 830.0,292.3 831.4,295.2 832.8,298.0 834.1,301.2 835.5,304.1 836.9,307.2 838.3,309.8 839.7,309.8 841.1,309.8 842.5,309.8 843.9,309.8 845.3,309.8 846.6,309.8 848.0,309.8 849.4,309.8 850.8,309.8 852.2,309.8 853.6,309.8 855.0,309.8 856.4,306.2 857.8,302.0 859.2,298.6 860.6,294.1 862.0,290.5 863.4,286.5 864.7,282.7 866.1,278.6 867.5,275.2 868.9,271.0 870.3,266.9 871.7,263.3 873.0,263.6 874.3,262.4 875.6,263.6 877.0,263.1 878.3,263.7 879.6,264.7 880.9,264.4 882.2,263.5 883.5,264.5 884.8,264.1 886.2,263.5 887.5,263.0 888.8,264.1 890.1,264.1 891.4,265.1 892.7,265.2 894.0,264.4 895.4,263.8 896.7,265.1 898.0,263.0 899.3,263.4 900.6,264.5 901.9,264.7 903.2,263.6 904.5,264.8 905.9,265.5 907.2,264.3 908.5,264.5 909.8,264.0 911.1,264.2 912.4,265.9 913.7,264.5 915.1,266.0 916.4,265.9 917.7,265.2 919.0,265.0 920.3,258.9 921.7,253.4 923.0,247.1 924.3,241.0 925.7,235.0 927.0,229.5 928.3,223.2 929.7,217.0 931.0,211.2 932.3,205.0 933.7,199.4 935.0,193.3 936.3,198.4 937.7,203.5 939.0,209.0 940.3,214.2 941.7,218.8 943.0,224.3 944.3,229.3 945.7,235.0 947.0,240.0 948.4,244.8 949.7,250.0 951.0,255.1 952.4,260.9 953.7,265.5 955.0,270.9 956.4,276.0 957.7,281.3 959.0,286.4 960.4,291.7 961.7,296.7 963.0,299.1 964.3,302.2 965.7,304.5 967.0,307.4 968.3,309.8 969.6,309.8 971.0,309.8 972.3,309.8 973.6,309.8 975.0,309.8 976.3,309.8 977.6,309.8 979.0,309.8 980.3,309.8 981.6,309.8 983.0,309.8 984.3,309.8 985.7,309.8 987.0,309.8 988.3,309.8 989.7,309.8 991.0,309.8 992.3,309.8 993.7,309.8 995.0,309.8 996.4,305.4 997.8,300.9 999.2,296.5 1000.6,292.0 1002.0,287.4 1003.4,283.2 1004.7,278.6 1006.1,273.7 1007.5,269.3 1008.9,265.0 1010.3,260.8 1011.7,256.0 1013.0,256.9 1014.3,256.1 1015.6,254.8 1017.0,256.7 1018.3,255.8 1019.6,256.2 1020.9,256.5 1022.2,256.3 1023.5,256.0 1024.9,257.0 1026.2,255.7 1027.5,255.7 1028.8,256.8 1030.1,255.3 1031.4,255.5 1032.8,256.8 1034.1,255.0 1035.4,256.8 1036.7,256.5 1038.0,255.8 1039.3,255.5 1040.6,256.7 1042.0,257.0 1043.3,255.1 1044.6,255.9 1045.9,256.1 1047.2,256.0 1048.5,255.6 1049.9,255.2 1051.2,256.2 1052.5,256.7 1053.8,255.0 1055.1,255.4 1056.4,256.8 1057.8,256.7 1059.1,256.4 1060.4,254.9 1061.7,256.0 1063.1,250.2 1064.4,244.3 1065.8,238.4 1067.2,232.1 1068.5,225.7 1069.9,220.2 1071.2,213.8 1072.6,208.1 1074.0,202.3 1075.3,196.2 1076.7,190.0 1078.0,194.2 1079.3,198.8 1080.6,203.8 1081.9,207.7 1083.2,212.5 1084.5,216.9 1085.8,221.2 1087.1,226.0 1088.4,230.1 1089.7,234.6 1091.0,239.3 1092.4,243.6 1093.7,248.1 1095.0,252.9 1096.3,257.5 1097.6,262.1 1098.9,266.1 1100.2,270.8 1101.5,275.2 1102.8,279.9 1104.1,284.3 1105.4,289.1 1106.7,293.3 1108.0,295.3 1109.3,297.2 1110.7,299.7 1112.0,301.4 1113.3,303.8 1114.7,305.8 1116.0,308.2 1117.3,309.8 1118.7,309.8 1120.0,309.8 1121.4,309.8 1122.7,309.8 1124.1,309.8 1125.5,309.8 1126.8,309.8 1128.2,309.8 1129.6,309.8 1130.9,309.8 1132.3,309.8 1133.6,309.8 1135.0,309.8 1136.4,305.9 1137.8,301.9 1139.2,297.5 1140.6,293.6 1142.0,289.3 1143.3,285.5 1144.7,281.3 1146.1,276.9 1147.5,272.8 1148.9,268.8 1150.3,265.0 1151.7,260.7 1153.0,259.9 1154.4,261.2 1155.7,261.0 1157.0,259.6 1158.4,261.0 1159.7,259.6 1161.0,259.7 1162.4,260.8 1163.7,259.9 1165.0,261.4 1166.3,260.4 1167.7,260.0 1169.0,261.2 1170.3,259.3 1171.7,260.9 1173.0,259.3 1174.3,259.5 1175.7,261.4 1177.0,260.8 1178.3,259.6 1179.7,259.4 1181.0,261.4 1182.3,260.6 1183.7,261.0 1185.0,259.3 1186.3,260.5 1187.6,259.8 1189.0,259.5 1190.3,259.7 1191.6,260.4 1193.0,259.7 1194.3,259.8 1195.6,259.2 1197.0,260.8 1198.3,260.0 1199.6,253.4 1201.0,246.9 1202.3,240.0 1203.6,233.6 1205.0,226.7 1206.3,220.1 1207.6,213.4 1209.0,206.8 1210.3,199.9 1211.6,193.0 1213.0,186.3 1214.3,180.0 1215.6,184.7 1216.9,189.5 1218.2,195.0 1219.5,199.7 1220.8,204.8 1222.1,209.2 1223.4,214.4 1224.7,219.6 1226.0,224.4 1227.3,229.1 1228.7,234.1 1230.0,238.7 1231.3,243.7 1232.6,248.6 1233.9,253.7 1235.2,258.6 1236.5,263.9 1237.8,268.3 1239.1,273.3 1240.4,278.2 1241.7,283.3 1243.0,285.3 1244.4,287.6 1245.7,289.8 1247.0,292.2 1248.4,294.1 1249.7,297.0 1251.0,298.8 1252.4,301.4 1253.7,303.5 1255.0,305.7 1256.4,307.8 1257.7,309.8 1259.1,309.8 1260.5,309.8 1261.8,309.8 1263.2,309.8 1264.6,309.8 1266.0,309.8 1267.4,309.8 1268.8,309.8 1270.2,309.8 1271.5,309.8 1272.9,309.8 1274.3,309.8 1275.7,306.1 1277.0,301.3 1278.4,297.4 1279.7,292.9 1281.1,288.9 1282.4,284.8 1283.8,280.1 1285.2,275.9 1286.5,271.5 1287.9,267.4 1289.2,263.1 1290.6,259.1 1291.9,255.3 1293.3,250.7 1294.6,250.3 1295.9,250.2 1297.2,250.5 1298.5,250.1 1299.8,251.1 1301.1,251.0 1302.4,249.7 1303.7,249.8 1305.0,250.8 1306.3,251.4 1307.7,250.7 1309.0,250.2 1310.3,251.4 1311.6,249.1 1312.9,249.2 1314.2,250.9 1315.5,249.9 1316.8,249.0 1318.1,250.2 1319.4,251.2 1320.7,250.1 1322.0,250.0" fill="none" stroke="#f5a3c0" stroke-width="0.8" stroke-linejoin="round" /><polyline points="493.0,246.7 494.4,245.5 495.9,244.2 497.3,245.7 498.7,242.9 500.1,244.2 501.6,243.0 503.0,243.0 504.4,238.0 505.8,236.6 507.1,231.5 508.5,229.9 509.9,225.2 511.2,222.1 512.6,220.3 514.0,218.7 515.4,212.6 516.8,209.8 518.1,208.2 519.5,206.3 520.9,201.6 522.2,197.7 523.6,196.8 525.0,191.7 526.3,189.5 527.6,192.4 529.0,189.7 530.3,188.8 531.6,188.3 532.9,188.7 534.2,190.3 535.6,187.4 536.9,188.7 538.2,188.5 539.5,187.1 540.9,187.4 542.2,185.1 543.5,184.7 544.8,184.9 546.1,186.4 547.5,185.0 548.8,184.2 550.1,184.9 551.4,184.0 552.7,183.0 554.1,184.6 555.4,183.9 556.7,182.7 557.7,309.8 559.1,309.8 560.5,309.8 561.9,309.8 563.2,309.8 564.6,309.8 566.0,309.8 567.4,309.8 568.8,309.8 570.2,309.8 571.5,309.8 572.9,309.8 574.3,309.8 575.7,309.8 577.0,306.9 578.3,306.2 579.6,303.9 580.9,303.2 582.2,300.6 583.5,296.7 584.8,297.4 586.1,291.9 587.4,291.1 588.7,290.3 590.0,285.9 591.3,285.1 592.7,281.3 594.0,281.7 595.3,280.0 596.6,277.2 597.9,276.3 599.2,272.0 600.5,271.5 601.8,269.0 603.1,266.9 604.4,264.3 605.7,263.8 607.0,262.1 608.3,258.3 609.6,257.9 611.0,258.3 612.3,255.5 613.7,257.7 615.0,257.2 616.4,258.2 617.7,257.2 619.1,254.7 620.4,254.7 621.8,255.5 623.1,252.6 624.5,254.0 625.8,252.5 627.1,251.9 628.5,251.3 629.8,253.8 631.2,250.9 632.5,251.1 633.9,251.3 635.2,252.9 636.6,249.4 637.9,250.5 639.3,250.5 640.6,251.5 642.0,250.9 643.3,249.3 644.7,247.7 646.0,242.2 647.4,239.7 648.7,236.4 650.1,235.4 651.4,232.6 652.8,226.3 654.2,223.3 655.5,220.4 656.9,217.3 658.2,215.2 659.6,212.5 660.9,208.1 662.3,206.0 663.6,203.7 664.9,205.0 666.3,204.4 667.6,204.8 668.9,206.0 670.2,204.6 671.6,203.6 672.9,203.6 674.2,203.5 675.5,200.6 676.9,203.7 678.2,202.8 679.5,202.8 680.8,202.2 682.1,200.2 683.5,199.9 684.8,198.3 686.1,200.1 687.4,197.5 688.8,197.1 690.1,197.3 691.4,196.8 692.7,197.1 694.1,195.6 695.4,195.1 696.7,196.7 697.7,309.8 699.0,309.8 700.4,309.8 701.7,309.8 703.0,309.8 704.4,309.8 705.7,309.8 707.0,309.8 708.3,309.8 709.7,309.8 711.0,309.8 712.3,309.8 713.7,309.8 715.0,309.8 716.3,306.5 717.6,304.2 718.9,303.2 720.2,299.7 721.5,301.0 722.8,297.9 724.1,293.9 725.4,292.2 726.7,290.5 728.0,288.5 729.3,285.4 730.7,286.2 732.0,284.7 733.3,280.5 734.6,278.4 735.9,274.7 737.2,272.7 738.5,271.6 739.8,269.2 741.1,269.3 742.4,264.5 743.7,261.9 745.0,261.7 746.3,263.3 747.7,261.3 749.0,259.5 750.3,260.9 751.7,258.6 753.0,260.3 754.3,261.9 755.7,261.2 757.0,260.3 758.3,258.3 759.7,258.5 761.0,257.4 762.3,259.6 763.7,258.4 765.0,259.1 766.3,257.1 767.7,256.4 769.0,258.5 770.3,259.0 771.7,258.2 773.0,257.7 774.3,257.5 775.7,257.0 777.0,254.7 778.3,255.6 779.7,254.7 781.0,253.2 782.3,252.9 783.7,253.7 785.0,254.3 786.3,249.9 787.7,248.2 789.0,245.8 790.3,240.3 791.7,238.8 793.0,235.6 794.3,232.0 795.7,226.2 797.0,222.2 798.3,218.8 799.7,215.2 801.0,211.8 802.3,210.1 803.7,207.7 805.0,202.7 806.3,203.7 807.6,201.9 808.9,202.2 810.2,202.4 811.5,199.1 812.8,201.1 814.1,201.7 815.4,200.8 816.7,200.3 818.0,198.8 819.3,197.3 820.7,199.3 822.0,197.1 823.3,198.6 824.6,198.9 825.9,196.2 827.2,195.9 828.5,197.7 829.8,196.4 831.1,193.8 832.4,193.3 833.7,193.0 835.0,194.0 835.7,309.8 837.1,309.8 838.5,309.8 839.8,309.8 841.2,309.8 842.6,309.8 844.0,309.8 845.4,309.8 846.7,309.8 848.1,309.8 849.5,309.8 850.9,309.8 852.2,309.8 853.6,309.8 855.0,309.8 856.3,309.3 857.7,306.5 859.0,301.5 860.4,301.9 861.7,300.2 863.1,296.5 864.4,293.0 865.8,291.4 867.1,287.4 868.5,284.6 869.8,286.1 871.2,282.4 872.5,279.6 873.9,278.9 875.2,274.5 876.6,273.9 877.9,271.4 879.3,266.6 880.6,264.4 882.0,262.2 883.3,259.7 884.7,258.7 886.0,256.0 887.3,254.8 888.7,255.1 890.0,253.7 891.3,256.5 892.7,254.0 894.0,254.2 895.3,254.4 896.7,255.4 898.0,253.2 899.3,254.9 900.7,253.0 902.0,252.8 903.3,252.5 904.6,250.2 906.0,251.6 907.3,250.3 908.6,249.3 910.0,252.2 911.3,249.5 912.6,250.4 914.0,251.1 915.3,250.2 916.6,249.0 918.0,249.5 919.3,249.3 920.6,250.0 922.0,247.0 923.3,248.3 924.6,245.6 925.9,241.4 927.2,238.5 928.6,237.5 929.9,233.5 931.2,230.7 932.5,228.5 933.8,226.2 935.1,221.3 936.4,219.0 937.8,215.6 939.1,212.7 940.4,210.4 941.7,206.7 943.0,206.1 944.4,205.9 945.7,205.3 947.1,206.7 948.4,205.2 949.8,205.5 951.1,205.3 952.5,202.1 953.8,202.9 955.2,204.0 956.5,203.1 957.9,199.8 959.2,199.3 960.5,200.2 961.9,198.2 963.2,198.5 964.6,197.3 965.9,199.3 967.3,199.3 968.6,199.3 970.0,195.9 971.3,197.7 972.7,197.0 974.0,194.5 975.4,197.0 976.7,195.0 977.3,309.8 978.7,309.8 980.0,309.8 981.4,309.8 982.7,309.8 984.1,309.8 985.5,309.8 986.8,309.8 988.2,309.8 989.6,309.8 990.9,309.8 992.3,309.8 993.6,309.8 995.0,309.8 996.3,309.7 997.6,304.5 998.9,305.2 1000.2,300.8 1001.6,298.9 1002.9,298.7 1004.2,295.9 1005.5,291.0 1006.8,289.9 1008.1,288.0 1009.4,285.1 1010.7,282.3 1012.0,280.6 1013.4,280.0 1014.7,275.0 1016.0,275.0 1017.3,272.3 1018.6,268.4 1019.9,267.5 1021.2,266.4 1022.5,263.8 1023.8,259.8 1025.1,261.3 1026.5,258.3 1027.8,256.8 1029.1,251.1 1030.4,249.6 1031.7,248.3 1033.0,246.2 1034.4,248.9 1035.7,246.6 1037.0,245.8 1038.4,246.7 1039.7,248.4 1041.0,247.7 1042.4,245.2 1043.7,244.5 1045.0,247.3 1046.4,245.7 1047.7,245.9 1049.0,243.2 1050.3,242.8 1051.7,245.1 1053.0,243.8 1054.3,242.1 1055.7,245.3 1057.0,243.8 1058.3,244.2 1059.7,241.1 1061.0,243.9 1062.3,240.5 1063.7,243.4 1065.0,241.7 1066.4,238.8 1067.7,235.6 1069.1,233.8 1070.4,232.6 1071.8,227.2 1073.1,223.9 1074.5,222.8 1075.8,219.0 1077.2,215.7 1078.6,213.2 1079.9,210.1 1081.3,208.0 1082.6,205.7 1084.0,202.9 1085.3,202.1 1086.7,198.3 1088.0,197.1 1089.4,197.5 1090.7,195.8 1092.0,196.1 1093.4,194.4 1094.7,195.0 1096.0,193.6 1097.3,196.1 1098.7,195.0 1100.0,193.1 1101.3,193.9 1102.7,195.3 1104.0,191.6 1105.3,194.1 1106.7,192.2 1108.0,192.0 1109.3,193.0 1110.6,190.8 1112.0,190.9 1113.3,191.2 1114.6,192.0 1116.0,189.1 1117.3,189.3 1117.7,309.8 1119.0,309.8 1120.4,309.8 1121.7,309.8 1123.0,309.8 1124.4,309.8 1125.7,309.8 1127.0,309.8 1128.3,309.8 1129.7,309.8 1131.0,309.8 1132.3,309.8 1133.7,309.8 1135.0,309.8 1136.3,309.3 1137.6,306.8 1139.0,304.5 1140.3,301.6 1141.6,299.3 1142.9,296.2 1144.2,294.4 1145.6,292.2 1146.9,292.9 1148.2,288.9 1149.5,286.5 1150.8,284.2 1152.2,285.2 1153.5,283.3 1154.8,280.5 1156.1,277.0 1157.5,274.8 1158.8,273.0 1160.1,271.6 1161.4,268.4 1162.7,267.6 1164.1,264.8 1165.4,265.6 1166.7,263.6 1168.0,259.9 1169.3,256.7 1170.7,257.6 1172.0,252.9 1173.3,251.7 1174.6,250.9 1176.0,249.2 1177.3,250.5 1178.7,250.6 1180.0,250.4 1181.4,249.0 1182.7,249.9 1184.1,247.7 1185.4,248.4 1186.8,247.5 1188.1,248.5 1189.5,246.8 1190.8,246.4 1192.1,247.3 1193.5,246.8 1194.8,247.9 1196.2,247.4 1197.5,248.1 1198.9,247.4 1200.2,247.4 1201.6,247.8 1202.9,245.6 1204.3,245.1 1205.6,247.5 1207.0,243.9 1208.3,245.0 1209.7,242.0 1211.1,237.8 1212.5,231.5 1213.9,230.8 1215.3,227.1 1216.7,222.2 1218.0,218.7 1219.4,215.1 1220.8,208.5 1222.2,206.2 1223.6,202.2 1225.0,198.3 1226.3,199.1 1227.6,198.5 1229.0,198.1 1230.3,196.6 1231.6,197.3 1232.9,196.0 1234.2,195.5 1235.6,193.1 1236.9,191.8 1238.2,191.7 1239.5,192.1 1240.8,190.6 1242.2,193.0 1243.5,191.4 1244.8,191.1 1246.1,190.6 1247.5,190.3 1248.8,189.0 1250.1,186.6 1251.4,189.2 1252.7,188.5 1254.1,187.0 1255.4,186.7 1256.7,186.0 1257.3,309.8 1258.7,309.8 1260.1,309.8 1261.5,309.8 1262.9,309.8 1264.3,309.8 1265.7,309.8 1267.0,309.8 1268.4,309.8 1269.8,309.8 1271.2,309.8 1272.6,309.8 1274.0,309.8 1275.3,308.6 1276.6,304.2 1277.9,304.8 1279.2,300.8 1280.5,298.0 1281.9,296.7 1283.2,296.5 1284.5,292.4 1285.8,292.4 1287.1,291.3 1288.4,287.4 1289.7,284.9 1291.0,283.2 1292.3,281.9 1293.7,280.2 1295.0,277.6 1296.3,275.6 1297.6,271.3 1298.9,269.5 1300.2,267.9 1301.5,267.8 1302.8,264.0 1304.1,263.0 1305.4,258.7 1306.8,256.8 1308.1,255.6 1309.4,255.2 1310.7,253.2 1312.0,251.1 1313.3,248.3 1314.8,247.6 1316.2,248.6 1317.7,248.5 1319.1,248.6 1320.5,247.4 1322.0,249.0" fill="none" stroke="#a3b0c2" stroke-width="0.8" stroke-linejoin="round" /><path d="M493.2 173.424V310.3" stroke="#e0639f" stroke-width="1.7"/><path d="M487.3 283.67H493.6" stroke="#c4005a" stroke-width="1.2"/><path d="M487.3 257.54H493.6" stroke="#c4005a" stroke-width="1.2"/><path d="M487.3 231.41H493.6" stroke="#c4005a" stroke-width="1.2"/><path d="M487.3 205.28H493.6" stroke="#c4005a" stroke-width="1.2"/><path d="M487.1 309.80H494" stroke="#e0639f" stroke-width="1.7"/><path d="M487.1 173.92H494" stroke="#e0639f" stroke-width="1.7"/><path d="M487.3 179.15H493.6" stroke="#f3b6d1" stroke-width="1.2"/><path d="M493 485.50H1322" stroke="#e9e9e9" stroke-width="1"/><path d="M493 453.50H1322" stroke="#e9e9e9" stroke-width="1"/><path d="M493 421.50H1322" stroke="#e9e9e9" stroke-width="1"/><path d="M493 388.50H1322" stroke="#e9e9e9" stroke-width="1"/><path d="M493 356.50H1322" stroke="#e9e9e9" stroke-width="1"/><path d="M493 349.50H1322" stroke="#e9e9e9" stroke-width="1"/><path d="M577.5 349.93V485.8" stroke="#e9e9e9" stroke-width="1"/><path d="M681.5 349.93V485.8" stroke="#e9e9e9" stroke-width="1"/><path d="M784.5 349.93V485.8" stroke="#e9e9e9" stroke-width="1"/><path d="M888.5 349.93V485.8" stroke="#e9e9e9" stroke-width="1"/><path d="M992.5 349.93V485.8" stroke="#e9e9e9" stroke-width="1"/><path d="M1096.5 349.93V485.8" stroke="#e9e9e9" stroke-width="1"/><path d="M1199.5 349.93V485.8" stroke="#e9e9e9" stroke-width="1"/><path d="M1303.5 349.93V485.8" stroke="#e9e9e9" stroke-width="1"/><polyline points="493.0,371.7 494.2,369.6 495.4,367.8 496.6,366.5 497.8,363.6 499.0,361.7 500.2,359.9 501.4,357.1 502.6,355.7 503.8,354.0 505.0,351.7 506.3,352.4 507.6,351.1 508.9,351.7 510.1,351.4 511.4,352.9 512.7,352.8 514.0,351.6 515.3,353.6 516.6,353.7 517.8,353.2 519.1,353.3 520.4,352.5 521.7,353.3 523.0,354.7 524.3,358.1 525.5,359.5 526.8,362.1 528.1,364.6 529.4,366.5 530.6,369.8 531.9,372.1 533.2,375.2 534.5,377.0 535.7,379.6 537.0,381.6 538.3,384.0 539.5,394.2 540.7,403.7 541.9,413.3 543.1,424.6 544.3,434.5 545.5,444.1 546.7,453.3 547.9,457.0 549.2,459.4 550.4,462.5 551.6,465.8 552.9,468.6 554.1,473.3 555.3,475.8 556.5,479.9 557.8,482.2 559.0,485.7 560.2,485.7 561.5,485.7 562.7,485.7 563.9,485.7 565.2,485.7 566.4,485.7 567.6,485.7 568.8,485.7 570.1,485.7 571.3,485.7 572.5,485.7 573.8,485.7 575.0,485.7 576.2,482.2 577.5,477.5 578.7,471.3 579.9,467.3 581.2,464.2 582.4,458.9 583.6,455.5 584.9,449.8 586.1,444.7 587.4,441.4 588.6,437.2 589.8,431.8 591.1,426.9 592.3,423.3 593.5,423.0 594.7,424.2 596.0,423.8 597.2,422.5 598.4,422.8 599.6,422.5 600.9,422.4 602.1,423.9 603.3,423.3 604.5,420.5 605.7,419.2 607.0,416.9 608.2,414.2 609.4,413.2 610.6,409.9 611.9,408.8 613.1,405.7 614.3,404.2 615.5,401.6 616.8,399.6 618.0,398.9 619.2,396.5 620.4,393.4 621.6,392.4 622.9,389.0 624.1,387.2 625.3,386.0 626.5,383.5 627.8,380.3 629.0,380.0 630.2,376.3 631.4,374.3 632.7,373.2 633.9,370.2 635.1,368.0 636.3,365.5 637.6,363.4 638.8,362.3 640.0,360.0 641.3,359.5 642.6,360.2 643.9,359.7 645.1,359.9 646.4,360.9 647.7,360.0 649.0,360.1 650.3,360.7 651.6,359.4 652.8,359.3 654.1,360.8 655.4,360.6 656.7,360.0 657.9,361.5 659.1,363.4 660.4,366.5 661.6,368.9 662.8,369.4 664.0,372.9 665.2,374.8 666.5,376.2 667.7,377.8 668.9,379.2 670.1,381.1 671.3,384.9 672.6,385.5 673.8,388.4 675.0,390.0 676.2,397.8 677.4,407.3 678.7,415.2 679.9,422.9 681.1,431.0 682.3,440.4 683.6,447.5 684.8,456.1 686.0,465.0 687.2,467.7 688.4,470.9 689.6,473.0 690.9,474.9 692.1,478.8 693.3,479.9 694.5,482.1 695.7,485.7 696.9,485.7 698.1,485.7 699.3,485.7 700.5,485.7 701.7,485.7 702.9,485.7 704.1,485.7 705.4,485.7 706.6,485.7 707.8,485.7 709.0,485.7 710.2,485.7 711.4,485.7 712.6,485.7 713.8,485.7 715.0,485.7 716.3,480.4 717.6,475.8 718.9,470.2 720.1,465.5 721.4,461.1 722.7,456.6 724.0,450.8 725.3,446.4 726.6,442.6 727.8,437.9 729.1,432.4 730.4,427.6 731.7,422.3 733.0,422.6 734.3,421.8 735.6,421.7 736.9,421.8 738.1,423.7 739.4,423.4 740.7,424.0 742.0,422.2 743.3,423.3 744.5,421.4 745.7,418.9 746.9,417.1 748.1,414.1 749.3,413.3 750.5,409.2 751.7,407.9 752.9,406.1 754.1,404.2 755.3,401.7 756.5,399.4 757.7,397.4 758.9,395.4 760.1,392.1 761.3,390.6 762.5,388.8 763.7,386.5 764.9,383.4 766.1,382.0 767.3,379.9 768.5,377.1 769.7,375.0 770.9,372.3 772.1,370.5 773.3,368.4 774.5,365.1 775.7,364.0 776.9,362.5 778.1,360.1 779.3,357.6 780.5,354.7 781.7,352.7 782.9,353.1 784.1,352.8 785.4,352.4 786.6,353.2 787.8,351.6 789.0,352.9 790.2,351.4 791.5,352.5 792.7,352.2 793.9,351.7 795.1,352.6 796.3,352.1 797.6,352.3 798.8,352.9 800.0,352.0 801.2,353.6 802.5,355.1 803.8,357.8 805.0,360.6 806.2,361.7 807.5,363.7 808.8,367.2 810.0,368.8 811.2,370.4 812.5,373.4 813.8,374.3 815.0,376.7 816.3,384.8 817.6,391.7 818.9,399.9 820.2,408.4 821.5,416.4 822.8,424.1 824.1,430.9 825.4,439.1 826.7,446.7 828.0,450.7 829.3,454.6 830.6,459.7 831.9,464.7 833.1,469.1 834.4,473.1 835.7,477.9 837.0,480.9 838.3,485.7 839.5,485.7 840.8,485.7 842.0,485.7 843.2,485.7 844.5,485.7 845.7,485.7 846.9,485.7 848.1,485.7 849.4,485.7 850.6,485.7 851.8,485.7 853.1,485.7 854.3,485.7 855.5,480.5 856.8,476.5 858.0,471.5 859.3,466.8 860.5,462.7 861.8,458.5 863.0,453.7 864.2,448.8 865.5,445.2 866.7,440.9 868.0,435.3 869.2,430.0 870.5,425.3 871.7,421.7 873.0,422.4 874.2,420.8 875.5,422.1 876.7,421.8 878.0,421.3 879.2,422.3 880.5,420.7 881.7,421.0 883.0,421.6 884.2,420.7 885.5,422.4 886.7,421.7 887.9,418.7 889.2,416.0 890.4,413.4 891.6,412.1 892.9,409.2 894.1,407.1 895.3,404.7 896.6,402.6 897.8,400.4 899.0,397.4 900.3,393.9 901.5,392.0 902.7,388.9 904.0,386.1 905.2,384.6 906.4,382.6 907.7,379.1 908.9,376.8 910.1,374.5 911.4,372.7 912.6,369.9 913.8,367.6 915.1,365.4 916.3,362.2 917.5,360.5 918.8,358.3 920.0,355.0 921.2,354.2 922.4,356.0 923.7,355.6 924.9,354.5 926.1,355.2 927.3,355.7 928.5,356.3 929.8,355.3 931.0,355.7 932.2,356.4 933.4,356.3 934.6,356.7 935.9,355.8 937.1,356.2 938.3,356.0 939.5,357.8 940.8,361.3 942.0,363.9 943.3,365.9 944.5,368.5 945.8,369.9 947.0,373.7 948.3,376.3 949.5,378.7 950.8,380.2 952.0,383.2 953.3,385.0 954.5,394.0 955.8,404.6 957.0,413.8 958.3,422.2 959.5,431.0 960.8,441.1 962.0,450.7 963.3,460.0 964.6,463.1 965.8,465.1 967.1,466.8 968.4,470.9 969.6,472.0 970.9,476.0 972.2,477.3 973.5,480.2 974.7,483.7 976.0,485.7 977.2,485.7 978.4,485.7 979.7,485.7 980.9,485.7 982.1,485.7 983.3,485.7 984.5,485.7 985.8,485.7 987.0,485.7 988.2,485.7 989.4,485.7 990.6,485.7 991.9,485.7 993.1,485.7 994.3,485.7 995.5,480.8 996.7,476.7 998.0,473.3 999.2,469.5 1000.4,465.6 1001.6,461.1 1002.8,457.5 1004.0,452.4 1005.3,449.2 1006.5,443.3 1007.7,439.4 1008.9,435.8 1010.1,431.2 1011.3,427.9 1012.6,423.6 1013.8,419.2 1015.0,415.0 1016.3,415.7 1017.6,415.1 1018.9,414.6 1020.2,414.8 1021.5,415.7 1022.8,415.8 1024.1,414.4 1025.4,415.7 1026.7,415.0 1027.9,413.8 1029.1,410.7 1030.3,408.6 1031.5,405.7 1032.7,404.2 1033.9,401.9 1035.1,399.9 1036.4,396.6 1037.6,396.3 1038.8,393.2 1040.0,390.8 1041.2,389.4 1042.4,386.7 1043.6,384.4 1044.8,382.6 1046.0,379.2 1047.2,378.0 1048.4,375.5 1049.6,374.4 1050.8,372.2 1052.0,368.7 1053.3,366.9 1054.5,364.1 1055.7,362.5 1056.9,361.1 1058.1,359.0 1059.3,356.0 1060.5,353.5 1061.7,351.7 1062.9,351.1 1064.1,351.9 1065.4,352.6 1066.6,351.0 1067.8,352.3 1069.0,350.7 1070.2,351.1 1071.5,351.2 1072.7,352.1 1073.9,351.3 1075.1,351.4 1076.3,351.9 1077.6,350.9 1078.8,352.2 1080.0,351.7 1081.2,353.2 1082.5,356.2 1083.8,357.9 1085.0,360.0 1086.2,362.8 1087.5,364.9 1088.8,367.0 1090.0,369.3 1091.2,371.7 1092.5,373.2 1093.8,375.5 1095.0,378.3 1096.2,387.1 1097.5,395.7 1098.8,404.0 1100.0,413.2 1101.2,421.3 1102.5,430.3 1103.8,437.6 1105.0,446.7 1106.3,449.8 1107.5,452.6 1108.8,455.5 1110.1,457.0 1111.3,459.6 1112.6,463.5 1113.9,464.8 1115.2,469.0 1116.4,471.4 1117.7,473.3 1117.9,485.7 1119.2,485.7 1120.4,485.7 1121.7,485.7 1122.9,485.7 1124.2,485.7 1125.5,485.7 1126.7,485.7 1128.0,485.7 1129.3,485.7 1130.5,485.7 1131.8,485.7 1133.0,485.7 1134.3,485.7 1135.5,480.5 1136.8,476.2 1138.0,472.7 1139.3,467.2 1140.5,462.4 1141.8,459.4 1143.0,454.0 1144.2,450.3 1145.5,444.5 1146.7,440.5 1148.0,436.6 1149.2,430.7 1150.5,426.6 1151.7,422.7 1153.0,423.1 1154.3,423.5 1155.6,423.6 1156.9,421.9 1158.1,422.7 1159.4,423.2 1160.7,422.7 1162.0,423.1 1163.3,422.7 1164.5,419.7 1165.7,417.2 1166.9,414.9 1168.1,412.4 1169.3,411.1 1170.5,408.7 1171.7,406.5 1172.9,403.3 1174.1,401.1 1175.3,398.8 1176.5,397.7 1177.7,395.7 1178.9,393.2 1180.1,389.2 1181.3,386.8 1182.5,386.3 1183.7,383.0 1184.9,381.2 1186.1,378.0 1187.3,376.0 1188.5,373.7 1189.7,371.2 1190.9,369.2 1192.1,365.7 1193.3,364.8 1194.5,362.7 1195.7,359.1 1196.9,357.3 1198.1,355.5 1199.3,352.7 1200.6,352.5 1201.8,352.1 1203.1,352.0 1204.4,352.7 1205.6,351.7 1206.9,353.5 1208.2,353.3 1209.4,353.1 1210.7,353.4 1212.0,353.0 1213.2,352.5 1214.5,352.9 1215.8,352.7 1217.0,353.7 1218.3,352.7 1219.6,355.8 1220.9,357.2 1222.2,361.0 1223.4,363.1 1224.7,365.7 1226.0,368.2 1227.3,369.9 1228.6,373.4 1229.9,375.8 1231.1,377.9 1232.4,380.6 1233.7,383.0 1235.0,385.0 1236.2,393.3 1237.5,402.5 1238.8,409.8 1240.0,418.8 1241.2,427.6 1242.5,435.2 1243.8,444.5 1245.0,453.3 1246.3,456.8 1247.5,460.0 1248.8,462.5 1250.1,467.1 1251.3,469.8 1252.6,472.4 1253.9,476.3 1255.2,479.4 1256.4,482.5 1257.7,485.7 1258.9,485.7 1260.2,485.7 1261.4,485.7 1262.6,485.7 1263.9,485.7 1265.1,485.7 1266.3,485.7 1267.6,485.7 1268.8,485.7 1270.1,485.7 1271.3,485.7 1272.5,485.7 1273.8,485.7 1275.0,485.7 1276.3,480.2 1277.5,476.1 1278.8,470.1 1280.1,465.0 1281.3,459.8 1282.6,454.9 1283.8,447.7 1285.1,443.6 1286.4,438.6 1287.6,432.4 1288.9,427.4 1290.2,421.4 1291.4,416.4 1292.7,411.7 1293.9,411.5 1295.2,410.9 1296.4,411.2 1297.6,412.5 1298.8,411.8 1300.1,411.7 1301.3,412.6 1302.5,411.8 1303.8,412.7 1305.0,411.7 1306.2,409.8 1307.4,408.0 1308.6,404.4 1309.9,403.3 1311.1,401.5 1312.3,397.9 1313.5,397.6 1314.7,393.9 1315.9,392.4 1317.1,389.6 1318.4,388.1 1319.6,386.2 1320.8,383.0 1322.0,381.7" fill="none" stroke="#ff4d0a" stroke-width="1.3" stroke-linejoin="round" /><path d="M493.2 349.43V486.3" stroke="#ff9a70" stroke-width="1.7"/><path d="M487.3 453.45H493.6" stroke="#ff4d0a" stroke-width="1.2"/><path d="M487.3 421.10H493.6" stroke="#ff4d0a" stroke-width="1.2"/><path d="M487.3 388.75H493.6" stroke="#ff4d0a" stroke-width="1.2"/><path d="M487.1 485.80H494" stroke="#ff9a70" stroke-width="1.7"/><path d="M487.1 349.93H494" stroke="#ff9a70" stroke-width="1.7"/><path d="M487.3 356.40H493.6" stroke="#ffc3a8" stroke-width="1.2"/><path d="M493 526.5H1322" stroke="#ededed" stroke-width="1"/><path d="M493 662.5H1322" stroke="#ededed" stroke-width="1"/><path d="M577.5 525.7V661.7" stroke="#e9e9e9" stroke-width="1"/><path d="M681.5 525.7V661.7" stroke="#e9e9e9" stroke-width="1"/><path d="M784.5 525.7V661.7" stroke="#e9e9e9" stroke-width="1"/><path d="M888.5 525.7V661.7" stroke="#e9e9e9" stroke-width="1"/><path d="M992.5 525.7V661.7" stroke="#e9e9e9" stroke-width="1"/><path d="M1096.5 525.7V661.7" stroke="#e9e9e9" stroke-width="1"/><path d="M1199.5 525.7V661.7" stroke="#e9e9e9" stroke-width="1"/><path d="M1303.5 525.7V661.7" stroke="#e9e9e9" stroke-width="1"/><path d="M493 525.7H557.3V661.7H574.3V525.7H697.3V661.7H714.3V525.7H837.3V661.7H854.3V525.7H977.3V661.7H994.3V525.7H1117.3V661.7H1134.3V525.7H1257.3V661.7H1274.3V525.7H1322" fill="none" stroke="#c4dcbd" stroke-width="0.9"/><path d="M493.2 525.2V662.2" stroke="#86bd72" stroke-width="1.7"/><path d="M487.3 525.7H493.6M487.3 661.7H493.6" stroke="#86bd72" stroke-width="1.7"/><path d="M492.4 665.7H1322.6" stroke="#777" stroke-width="1.6"/><path d="M493 665.7V670.2M1322 665.7V670.2M577.4 665.7V670.2M681.1 665.7V670.2M784.9 665.7V670.2M888.6 665.7V670.2M992.4 665.7V670.2M1096.2 665.7V670.2M1199.9 665.7V670.2M1303.7 665.7V670.2" stroke="#555" stroke-width="1"/></svg>
<span id="t51" class="t" style="left:484.20px;transform:translateX(-100%);top:169.00px;font-size:10px;line-height:10px;font-weight:400;color:#333;letter-spacing:0.075px;">52</span>
<span id="t52" class="t" style="left:484.20px;transform:translateX(-100%);top:175.00px;font-size:10px;line-height:10px;font-weight:400;color:#c4c4c4;letter-spacing:0.075px;">50</span>
<span id="t53" class="t" style="left:484.20px;transform:translateX(-100%);top:201.00px;font-size:10px;line-height:10px;font-weight:400;color:#333;letter-spacing:0.075px;">40</span>
<span id="t54" class="t" style="left:484.20px;transform:translateX(-100%);top:227.00px;font-size:10px;line-height:10px;font-weight:400;color:#333;letter-spacing:0.075px;">30</span>
<span id="t55" class="t" style="left:484.20px;transform:translateX(-100%);top:253.00px;font-size:10px;line-height:10px;font-weight:400;color:#333;letter-spacing:0.075px;">20</span>
<span id="t56" class="t" style="left:484.20px;transform:translateX(-100%);top:279.00px;font-size:10px;line-height:10px;font-weight:400;color:#333;letter-spacing:0.075px;">10</span>
<span id="t57" class="t" style="left:484.20px;transform:translateX(-100%);top:306.00px;font-size:10px;line-height:10px;font-weight:400;color:#333;letter-spacing:0.000px;">0</span>
<span id="t58" class="t" style="left:484.20px;transform:translateX(-100%);top:345.00px;font-size:10px;line-height:10px;font-weight:400;color:#333;letter-spacing:0.075px;">42</span>
<span id="t59" class="t" style="left:484.20px;transform:translateX(-100%);top:352.00px;font-size:10px;line-height:10px;font-weight:400;color:#c4c4c4;letter-spacing:0.075px;">40</span>
<span id="t60" class="t" style="left:484.20px;transform:translateX(-100%);top:384.00px;font-size:10px;line-height:10px;font-weight:400;color:#333;letter-spacing:0.075px;">30</span>
<span id="t61" class="t" style="left:484.20px;transform:translateX(-100%);top:417.00px;font-size:10px;line-height:10px;font-weight:400;color:#333;letter-spacing:0.075px;">20</span>
<span id="t62" class="t" style="left:484.20px;transform:translateX(-100%);top:449.00px;font-size:10px;line-height:10px;font-weight:400;color:#333;letter-spacing:0.075px;">10</span>
<span id="t63" class="t" style="left:484.20px;transform:translateX(-100%);top:482.00px;font-size:10px;line-height:10px;font-weight:400;color:#333;letter-spacing:0.000px;">0</span>
<span id="t64" class="t" style="left:484.20px;transform:translateX(-100%);top:521.00px;font-size:10px;line-height:10px;font-weight:400;color:#333;letter-spacing:-0.365px;">ACTIVE</span>
<span id="t65" class="t" style="left:484.20px;transform:translateX(-100%);top:657.00px;font-size:10px;line-height:10px;font-weight:400;color:#333;letter-spacing:-0.161px;">INACTIVE</span>
<span id="t66" class="t" style="left:577.40px;transform:translateX(-50%);top:672.00px;font-size:10px;line-height:10px;font-weight:400;color:#333;letter-spacing:0.310px;">03 AM</span>
<span id="t67" class="t" style="left:681.15px;transform:translateX(-50%);top:672.00px;font-size:10px;line-height:10px;font-weight:400;color:#333;letter-spacing:0.310px;">04 AM</span>
<span id="t68" class="t" style="left:784.90px;transform:translateX(-50%);top:672.00px;font-size:10px;line-height:10px;font-weight:400;color:#333;letter-spacing:0.310px;">05 AM</span>
<span id="t69" class="t" style="left:888.65px;transform:translateX(-50%);top:672.00px;font-size:10px;line-height:10px;font-weight:400;color:#333;letter-spacing:0.310px;">06 AM</span>
<span id="t70" class="t" style="left:992.40px;transform:translateX(-50%);top:672.00px;font-size:10px;line-height:10px;font-weight:400;color:#333;letter-spacing:0.310px;">07 AM</span>
<span id="t71" class="t" style="left:1096.15px;transform:translateX(-50%);top:672.00px;font-size:10px;line-height:10px;font-weight:400;color:#333;letter-spacing:0.310px;">08 AM</span>
<span id="t72" class="t" style="left:1199.90px;transform:translateX(-50%);top:672.00px;font-size:10px;line-height:10px;font-weight:400;color:#333;letter-spacing:0.310px;">09 AM</span>
<span id="t73" class="t" style="left:1303.65px;transform:translateX(-50%);top:672.00px;font-size:10px;line-height:10px;font-weight:400;color:#333;letter-spacing:0.310px;">10 AM</span>
<div class="a" style="left:493.2px;top:690.3px;width:31.6px;height:31.6px;background:#fff;border:1px solid #dcdcdc;border-radius:3px;"></div>
<svg class="a" style="left:506.8px;top:703.9px;" width="4" height="6.4" viewBox="0 0 4 6.4"><path d="M4 0V6.4L0 3.2Z" fill="#333"/></svg>
<div class="a" style="left:529.2px;top:690.3px;width:32.5px;height:31.6px;background:#fff;border:1px solid #dcdcdc;border-radius:3px;"></div>
<svg class="a" style="left:537.9px;top:697.8px;" width="15" height="15.5" viewBox="0 0 15 15.5"><rect x="0.9" y="2.3" width="13.2" height="12.4" rx="1.2" fill="none" stroke="#666" stroke-width="1"/><path d="M0.9 5.6H14.1" stroke="#666" stroke-width="1"/><circle cx="4.6" cy="1.9" r="0.9" fill="#fff" stroke="#666" stroke-width="0.8"/><circle cx="10.4" cy="1.9" r="0.9" fill="#fff" stroke="#666" stroke-width="0.8"/><rect x="8.6" y="9.4" width="3.6" height="3.6" fill="#777"/></svg>
<div class="a" style="left:566px;top:690.3px;width:32.8px;height:31.6px;background:#fff;border:1px solid #c3d0e0;border-radius:3px;"></div>
<svg class="a" style="left:574.4px;top:697.9px;" width="16" height="16" viewBox="0 0 16 16"><circle cx="8" cy="8" r="6.6" fill="none" stroke="#666" stroke-width="1"/><path d="M7.4 4.2V8.6H11.6" fill="none" stroke="#666" stroke-width="1"/></svg>
<div class="a" style="left:820.4px;top:690.3px;width:31.2px;height:31.6px;background:#fff;border:1px solid #dcdcdc;border-radius:3px;"></div>
<svg class="a" style="left:826px;top:698px;" width="20" height="18" viewBox="0 0 20 18"><path d="M2.4 1.4V16.5H18" fill="none" stroke="#555" stroke-width="1"/><path d="M4 8.6Q8 8.2 10.4 6.4T14.6 3" fill="none" stroke="#555" stroke-width="1.2"/><path d="M5.4 8.7H16.4" stroke="#666" stroke-width="0.9"/><path d="M4 15.4L6 13.8H8L9.6 12.4H11.4L12.8 11H15" fill="none" stroke="#666" stroke-width="0.9"/></svg>
<div class="a" style="left:856.3px;top:690.3px;width:102.6px;height:31.6px;background:#fff;border:1px solid #dcdcdc;border-radius:3px;"></div>
<div class="a" style="left:927.3px;top:691.3px;width:1px;height:29.6px;background:#dcdcdc"></div>
<span id="t74" class="t" style="left:869.00px;top:700.00px;font-size:14px;line-height:14px;font-weight:400;color:#333;letter-spacing:-0.134px;">8 hours</span>
<svg class="a" style="left:936.9px;top:699.2px;" width="13.2" height="15" viewBox="0 0 15 17"><rect x="2.5" y="7.4" width="10" height="8" rx="1.2" fill="none" stroke="#444" stroke-width="1.4"/><path d="M4.6 7.2V4.6A2.9 2.9 0 0 1 10.4 4.6V5.2" fill="none" stroke="#444" stroke-width="1.4"/><circle cx="7.5" cy="11.4" r="1.1" fill="#444"/></svg>
<div class="a" style="left:963.4px;top:690.3px;width:31px;height:31.6px;background:#fff;border:1px solid #eeeeee;border-radius:3px;"></div>
<svg class="a" style="left:971.5px;top:699.4px;" width="16" height="16" viewBox="0 0 16 16"><path d="M3.6 7.8A5.3 5.3 0 1 1 5.2 11.6" fill="none" stroke="#cfcfcf" stroke-width="1.1"/><path d="M1.2 6.2L3.6 9L6 6.2Z" fill="#cfcfcf"/><path d="M8.7 5V8.2L11 9.6" fill="none" stroke="#cfcfcf" stroke-width="1"/></svg>
<div class="a" style="left:1221.3px;top:690.3px;width:32.4px;height:31.6px;background:#fff;border:1px solid #dcdcdc;border-radius:3px;"></div>
<svg class="a" style="left:1230px;top:697.8px;" width="15" height="15.5" viewBox="0 0 15 15.5"><rect x="0.9" y="2.3" width="13.2" height="12.4" rx="1.2" fill="none" stroke="#666" stroke-width="1"/><path d="M0.9 5.6H14.1" stroke="#666" stroke-width="1"/><circle cx="4.6" cy="1.9" r="0.9" fill="#fff" stroke="#666" stroke-width="0.8"/><circle cx="10.4" cy="1.9" r="0.9" fill="#fff" stroke="#666" stroke-width="0.8"/><rect x="8.6" y="9.4" width="3.6" height="3.6" fill="#777"/></svg>
<div class="a" style="left:1258.3px;top:690.3px;width:63.6px;height:31.6px;background:#fff;border:1px solid #dcdcdc;border-radius:3px"></div>
<div class="a" style="left:1258.3px;top:690.3px;width:32.3px;height:31.6px;background:#fff;border:1px solid #c3d0e0;border-radius:3px;"></div>
<svg class="a" style="left:1266.5px;top:697.8px;" width="16" height="16" viewBox="0 0 16 16"><circle cx="8" cy="8" r="6.6" fill="none" stroke="#666" stroke-width="1"/><path d="M7.4 4.2V8.6H11.6" fill="none" stroke="#666" stroke-width="1"/></svg>
<svg class="a" style="left:1304.4px;top:703.9px;" width="3.6" height="6.2" viewBox="0 0 3.6 6.2"><path d="M0 0V6.2L3.6 3.1Z" fill="#333"/></svg>
<svg class="a" style="left:493px;top:730px;" width="829" height="30" viewBox="0 0 829 30"><polyline points="0.0,1.3 1.3,1.8 3.2,21.0 5.5,2.3 6.6,1.5 8.3,21.7 10.5,2.5 10.8,2.4 13.4,20.5 16.3,2.8 16.6,1.9 19.0,21.9 21.1,1.4 21.9,0.5 23.8,20.9 26.1,1.5 26.6,0.9 28.9,20.6 30.5,2.7 31.4,3.0 33.3,22.0 36.1,1.2 36.7,1.7 39.3,21.9 41.5,2.7 42.6,2.3 45.0,21.8 47.8,2.0 48.7,1.1 50.7,21.6 52.9,1.3 53.8,1.8 56.3,20.7 58.5,2.0 59.7,2.1 61.9,21.0 63.5,1.1 64.6,2.1 67.0,20.8 68.9,2.0 70.3,2.5 72.7,21.7 74.6,2.0 76.0,2.2 78.2,20.5 80.6,2.9 80.9,3.5 83.6,21.8 86.2,2.6 87.1,2.7 89.3,20.1 92.1,2.1 92.6,2.1 94.9,20.7 97.0,2.1 98.0,2.3 100.2,20.1 102.2,1.4 103.1,2.1 105.8,21.6 108.6,1.5 109.8,1.9 111.5,20.0 113.2,2.5 113.7,1.7 116.2,20.7 117.9,1.3 118.8,0.7 120.8,21.4 123.0,1.6 123.8,0.7 126.0,20.8 127.9,1.2 129.2,1.2 131.1,21.2 133.8,1.0 134.1,0.3 136.7,20.3 139.3,2.4 140.2,1.8 143.2,21.6 145.5,1.4 146.5,1.2 148.9,20.6 151.4,1.1 152.0,2.1 154.8,20.6 157.6,1.6 159.0,2.1 161.2,20.5 162.8,2.8 163.1,3.4 166.0,21.1 167.9,2.7 169.3,3.1 171.6,20.8 173.7,1.4 174.8,1.3 176.6,20.2 179.2,1.6 180.0,1.2 182.8,21.8 184.5,1.4 185.1,2.4 187.8,20.7 189.7,2.3 191.0,3.2 193.1,21.8 195.6,2.0 197.0,1.4 199.6,20.2 201.5,2.8 202.0,3.3 204.4,21.7 206.6,1.7 207.2,2.4 209.6,21.9 212.5,1.3 213.4,0.5 215.0,20.1 217.8,2.6 219.1,2.3 221.5,21.6 223.7,2.1 224.2,1.3 226.2,21.8 228.6,2.9 229.4,2.4 232.1,21.7 233.7,2.3 234.1,1.6 236.9,20.1 238.8,3.0 239.6,2.2 241.5,20.5 244.1,1.2 245.4,1.0 248.4,21.8 250.4,1.5 251.2,0.7 253.7,20.1 255.3,3.0 256.0,3.2 258.2,20.6 259.9,2.8 261.3,3.8 263.1,20.4 265.5,3.0 266.4,3.3 269.0,20.5 271.3,1.6 271.9,0.8 273.9,22.0 276.1,2.3 277.1,3.2 279.3,20.6 281.3,1.6 282.6,2.4 284.6,20.7 287.0,2.2 287.9,1.6 289.6,20.5 291.3,2.1 291.6,1.3 294.1,20.6 296.8,2.0 298.1,1.3 300.4,21.6 302.1,2.9 302.6,3.5 305.6,21.6 307.6,1.2 308.5,2.1 310.5,21.8 312.3,2.8 312.6,2.5 315.5,21.6 318.3,2.7 319.5,3.1 321.3,20.9 323.2,2.4 324.2,1.9 325.9,21.9 328.6,2.1 329.5,2.8 331.8,20.8 333.9,1.5 334.2,1.8 336.3,21.1 338.0,1.7 338.5,1.0 340.4,21.7 342.6,1.8 343.6,1.3 345.2,21.1 347.5,2.3 348.3,2.7 350.9,20.5 353.2,2.0 353.7,1.8 356.1,21.8 359.0,1.6 360.0,0.6 361.7,21.0 364.6,1.3 365.7,2.1 367.8,21.4 370.5,1.7 371.6,2.2 374.1,21.7 376.9,2.9 377.8,2.3 379.8,20.4 382.2,2.5 382.5,2.9 385.1,20.7 387.5,1.3 388.6,0.4 391.5,21.6 394.0,1.5 395.4,2.5 397.2,21.6 399.9,2.3 401.0,2.2 403.9,21.9 406.0,2.6 406.8,1.9 408.9,20.3 411.7,2.9 412.2,3.1 414.3,20.2 416.3,1.5 417.5,0.5 419.4,20.9 421.0,2.3 422.0,2.9 423.9,20.6 426.2,1.5 427.2,1.0 429.7,21.6 432.5,2.9 433.4,2.9 436.2,21.5 438.6,1.8 439.2,1.0 441.9,20.2 444.5,2.1 445.9,2.6 448.9,20.3 451.2,2.1 451.8,2.2 453.9,21.1 455.5,1.9 456.3,1.5 458.5,21.6 461.0,2.0 462.1,1.7 464.0,20.0 466.0,2.2 467.3,2.9 469.6,22.0 471.8,2.7 472.6,3.2 475.5,20.6 477.4,2.2 478.3,2.0 479.9,20.8 482.1,1.8 483.4,2.0 486.0,21.8 488.6,2.0 489.8,2.3 492.3,21.3 494.5,2.3 495.5,3.1 498.2,21.7 500.8,2.6 501.8,2.3 503.8,21.4 506.6,2.1 507.0,2.8 509.3,20.9 511.0,2.0 512.1,1.9 514.2,21.3 515.9,2.0 517.2,2.4 519.4,21.4 521.9,1.4 522.4,2.2 524.3,20.1 527.1,2.0 527.8,2.1 530.4,20.3 532.9,2.4 534.2,2.0 536.6,20.5 539.0,1.3 540.2,2.1 542.3,20.4 545.2,2.4 546.5,1.5 549.3,21.2 551.4,1.9 552.5,2.4 554.4,21.3 556.2,2.9 557.0,3.8 559.6,21.2 561.6,2.1 562.0,1.3 564.6,20.7 567.3,1.5 568.4,1.9 570.4,20.2 572.6,2.0 573.0,1.4 574.7,21.2 577.5,1.4 577.8,1.8 580.5,21.9 583.0,1.7 584.2,0.9 586.8,20.2 589.0,2.0 589.7,1.3 591.6,21.6 593.9,2.2 594.4,2.6 596.4,21.2 599.3,3.0 599.6,3.6 602.4,20.6 604.6,2.2 605.9,2.0 608.7,21.5 610.6,2.8 610.8,2.1 613.4,20.1 615.5,1.3 616.3,1.9 619.2,20.1 620.9,2.7 621.2,2.2 623.0,20.2 624.6,2.3 625.8,2.6 628.5,21.3 630.7,2.3 632.1,2.5 634.0,20.1 636.9,2.2 637.6,2.4 640.0,21.0 641.7,1.7 642.4,1.1 645.3,20.8 647.8,2.4 648.9,2.9 651.6,20.5 654.5,1.3 655.9,2.0 658.7,20.1 660.4,2.6 661.2,2.4 664.2,20.1 666.5,1.9 666.9,1.7 669.5,21.8 671.2,2.0 671.6,2.6 673.3,20.1 675.4,2.5 676.1,1.7 678.8,21.6 681.6,1.6 682.3,1.1 684.7,20.7 686.8,2.6 688.2,2.7 689.9,21.3 692.2,3.0 693.3,3.6 695.8,21.1 698.7,2.7 699.3,2.0 701.4,21.0 703.2,1.7 704.1,0.8 706.8,21.3 708.9,1.6 709.6,1.2 712.2,21.0 714.5,1.3 715.9,0.9 717.9,20.1 720.9,2.0 722.2,2.8 725.2,21.6 728.1,2.8 729.3,2.1 731.6,21.2 734.6,2.6 735.7,3.1 737.8,21.9 740.3,1.8 741.1,2.8 743.5,20.3 745.3,2.4 746.2,3.2 748.1,20.8 750.7,1.1 751.1,1.2 753.0,20.2 755.0,2.3 755.9,1.4 757.6,21.7 760.1,1.3 761.4,0.4 763.5,21.7 766.1,1.6 767.4,1.8 770.2,21.8 772.4,2.4 773.3,3.2 776.0,21.5 778.8,3.0 779.3,2.4 782.0,21.5 784.3,2.0 785.0,2.7 787.7,21.2 789.4,2.7 790.2,2.1 792.2,21.4 793.9,1.2 794.5,2.0 797.1,21.9 799.5,2.1 800.4,2.2 802.8,21.6 805.7,1.8 806.7,1.4 808.7,21.0 811.1,2.1 812.5,1.4 815.0,22.0 817.7,2.1 818.4,1.9 821.3,21.8 823.8,2.8 825.2,3.5 827.3,20.9" fill="none" stroke="#ff7a45" stroke-width="1.7" opacity="0.9"/><polyline points="0.0,3.9 1.1,3.0 3.4,26.7 6.9,3.3 7.4,3.6 10.7,26.2 13.2,2.9 13.8,3.3 17.8,26.9 21.0,2.9 21.4,2.0 23.6,25.9 26.4,2.8 27.4,2.8 30.6,25.5 32.8,2.7 33.2,2.7 37.2,26.3 39.7,3.8 40.7,4.3 44.5,26.5 48.1,2.7 49.3,3.6 51.7,26.5 55.2,2.9 55.9,2.9 59.8,26.0 63.5,2.7 64.5,3.5 67.6,26.1 71.4,3.4 72.1,2.9 74.9,26.4 77.4,3.8 77.8,4.6 80.6,26.9 84.0,3.0 84.7,3.3 88.0,25.6 90.5,3.0 91.6,3.3 93.9,26.6 97.4,3.8 97.8,4.3 100.1,26.3 102.8,2.5 103.8,1.7 106.9,26.7 109.5,2.4 110.6,2.3 114.1,25.1 116.9,2.3 117.7,1.5 121.7,25.1 125.2,2.0 125.6,2.7 128.1,25.4 131.6,2.8 131.8,3.8 134.3,25.1 137.1,3.2 138.0,2.5 140.7,25.1 143.8,3.5 144.6,4.3 148.2,26.7 151.7,2.9 152.1,3.3 154.9,25.2 157.9,3.7 158.2,3.9 161.1,26.0 163.5,3.9 164.0,4.1 166.9,25.0 170.1,2.3 170.4,1.3 172.9,25.2 176.2,3.0 177.3,3.9 181.3,25.5 184.3,2.5 185.1,2.7 188.8,26.4 191.4,2.8 192.1,1.9 194.3,25.8 196.7,3.4 197.1,2.6 199.6,25.5 202.2,3.0 202.8,2.7 206.2,25.4 210.1,3.9 210.9,3.8 214.1,26.2 216.3,2.8 217.0,2.2 219.4,26.6 222.2,3.0 223.3,3.3 226.0,27.0 228.8,2.0 229.7,1.2 232.4,26.7 235.8,2.0 236.4,1.9 239.5,25.4 242.8,2.1 243.2,1.9 247.2,25.2 250.7,2.4 251.5,2.2 254.5,26.5 257.4,2.2 257.7,1.4 261.5,26.3 265.4,3.4 265.7,3.7 269.3,26.4 272.4,2.7 273.0,3.3 275.7,26.1 278.7,3.9 279.7,4.8 283.4,25.6 286.0,3.0 286.4,2.8 289.9,26.8 293.1,3.6 293.4,3.3 297.5,25.3 300.4,2.1 300.7,2.9 304.7,26.3 307.1,2.6 307.5,2.9 311.0,25.9 314.1,2.2 314.8,3.1 318.4,25.2 321.5,3.4 322.0,4.2 325.0,26.4 327.9,4.0 328.8,4.1 331.3,25.9 333.5,3.2 334.5,2.6 337.6,26.0 340.6,3.4 341.6,3.8 344.7,26.9 347.4,3.5 348.3,4.0 352.0,25.4 355.3,2.8 356.2,3.8 359.5,25.0 362.5,3.4 363.6,3.7 367.2,25.0 371.2,3.5 371.9,4.3 375.7,25.2 379.4,3.5 379.8,4.0 383.1,25.4 386.7,2.3 387.5,2.1 390.2,26.1 393.2,2.4 394.3,1.6 396.5,26.0 400.2,3.3 401.1,3.3 404.5,25.7 407.2,3.0 407.4,2.2 411.0,25.3 414.5,3.6 415.1,3.9 418.8,26.7 421.2,2.3 421.7,2.3 424.5,25.0 427.7,3.9 428.2,4.0 431.1,25.9 434.9,2.6 435.7,2.6 438.9,26.8 441.2,3.6 441.7,3.9 445.3,26.3 448.2,3.7 448.5,3.9 451.4,26.1 455.1,3.6 455.9,3.2 458.5,25.9 461.1,2.6 462.2,1.8 465.9,25.8 468.8,2.6 469.0,2.6 471.5,25.9 474.2,3.8 475.3,3.7 478.6,26.9 481.4,2.2 481.8,1.6 485.3,25.7 488.1,3.6 488.5,4.2 491.9,25.8 495.6,2.7 496.6,3.5 499.7,26.4 503.6,3.5 504.5,4.2 508.4,26.5 512.4,2.6 513.2,2.9 516.0,25.8 518.5,3.9 519.1,3.9 522.9,25.4 526.9,2.3 527.1,2.0 529.9,26.8 533.8,3.5 534.4,3.6 537.0,26.7 539.9,2.6 540.7,1.9 543.4,26.9 545.8,2.3 546.2,1.8 549.1,25.5 551.9,2.5 552.3,2.7 555.1,25.7 558.7,2.1 559.1,2.8 562.0,26.6 564.5,3.0 565.4,2.7 569.0,26.2 571.9,4.0 572.5,3.9 575.8,25.6 579.6,3.2 580.3,3.3 584.3,27.0 588.0,2.9 588.6,3.0 590.9,25.2 594.9,2.3 596.0,2.6 599.8,25.2 602.6,3.6 602.8,2.8 605.6,25.3 608.1,3.3 608.4,4.3 611.7,25.1 615.6,2.5 616.2,2.6 618.7,26.0 620.9,2.4 622.0,3.0 625.1,26.4 628.9,2.3 629.6,1.5 632.0,25.2 634.5,2.1 634.9,1.9 638.3,26.7 642.1,3.4 642.8,4.3 645.3,25.2 649.0,3.3 649.4,3.0 652.1,25.9 655.0,2.8 656.0,3.4 659.2,25.9 661.9,3.5 663.0,3.0 666.5,26.4 669.9,2.1 670.6,1.5 673.1,26.2 676.5,3.3 677.4,3.7 680.4,25.1 684.0,3.6 685.0,3.8 687.2,25.4 689.6,3.3 690.3,2.6 694.3,27.0 698.1,2.9 698.6,2.3 702.3,26.4 705.0,3.8 705.7,3.6 708.6,26.4 711.7,3.3 712.0,3.7 714.7,26.8 717.2,2.7 717.9,2.5 721.1,26.8 723.6,3.5 724.5,4.1 727.5,25.9 730.3,2.9 730.7,2.3 733.8,25.4 736.8,3.1 737.3,2.5 740.6,26.7 743.2,3.2 744.0,4.0 747.4,25.6 750.0,3.7 750.5,2.7 754.3,25.4 757.0,2.6 757.5,3.1 760.3,25.9 763.2,3.7 763.4,3.8 765.9,25.3 769.2,2.8 769.4,2.9 773.3,26.3 776.4,3.6 777.4,2.9 780.2,26.9 784.1,2.4 784.9,3.2 788.2,26.4 791.3,2.5 791.7,1.6 795.1,25.3 798.5,2.8 799.1,3.7 802.0,25.9 804.8,2.4 805.2,2.5 808.9,25.2 812.9,3.3 813.1,3.8 816.0,26.0 818.4,3.0 819.1,3.6 822.3,26.4 825.9,2.4 826.1,2.4 828.5,25.3" fill="none" stroke="#7386a3" stroke-width="1.15" opacity="0.85"/><polyline points="0.0,1.5 0.2,1.3 2.4,26.1 4.9,2.8 5.6,3.4 7.8,27.1 10.2,1.3 10.4,0.8 13.8,27.7 17.0,2.6 17.2,2.2 20.1,27.5 23.4,2.8 23.6,3.0 26.6,27.0 28.8,1.9 29.0,2.8 32.3,27.1 34.7,2.8 35.2,3.6 38.4,27.0 41.0,2.2 41.4,1.5 43.8,27.6 45.8,1.1 46.3,0.7 49.1,26.9 51.5,3.0 51.8,2.8 54.0,27.3 56.4,1.7 57.0,1.4 59.8,27.8 61.9,1.1 62.2,1.7 65.0,26.5 67.5,1.4 67.9,0.4 70.9,27.8 74.4,2.5 75.1,1.5 77.5,27.9 80.7,1.8 81.4,2.1 84.6,26.6 86.8,1.9 87.1,1.7 90.5,26.7 92.4,1.1 92.7,1.7 95.2,26.6 97.2,3.0 97.6,2.4 99.6,26.1 101.8,2.4 102.0,1.4 104.7,26.5 108.2,1.2 108.7,1.8 111.3,28.0 113.9,1.5 114.3,0.6 116.9,26.5 120.3,2.7 120.7,1.7 123.0,26.5 125.3,1.5 126.0,0.7 127.9,27.9 130.7,3.0 131.2,3.8 134.1,27.6 137.2,2.0 137.4,1.4 140.7,27.8 144.1,1.7 144.7,2.3 147.6,27.6 150.4,2.3 151.0,1.8 154.3,27.9 156.4,2.9 157.1,3.3 159.1,27.8 161.2,2.9 161.8,2.1 163.9,27.3 166.7,2.5 167.5,1.9 169.4,27.8 171.3,2.8 171.5,3.4 174.7,27.8 177.5,2.8 177.8,3.1 180.2,27.8 183.3,1.9 183.8,1.0 185.8,27.2 188.4,2.7 189.0,2.0 191.5,27.5 194.2,1.0 194.9,1.7 196.9,27.1 199.4,2.6 199.8,2.0 202.5,27.9 204.5,1.2 205.1,2.0 207.8,26.9 211.1,2.6 211.3,3.3 213.5,26.6 216.7,1.8 217.4,1.2 220.7,26.4 222.8,2.0 223.2,2.1 226.5,27.4 228.4,1.6 228.9,1.6 232.0,27.0 234.0,1.5 234.7,1.2 237.8,28.0 240.7,2.4 241.3,2.0 244.7,26.9 248.0,1.6 248.7,2.2 251.6,26.9 253.7,2.5 254.1,2.9 256.2,26.2 258.3,2.6 258.6,3.4 261.1,27.2 263.6,2.2 263.8,2.0 267.2,26.4 270.1,1.7 270.5,0.7 272.4,27.9 275.6,2.6 276.3,3.5 278.5,27.2 281.1,2.1 281.9,2.7 285.4,26.2 288.3,2.4 288.9,2.6 292.2,26.6 295.6,1.8 296.1,2.6 299.1,26.6 301.4,1.7 302.0,2.6 305.3,26.8 307.9,2.6 308.2,2.5 310.1,26.4 312.9,2.4 313.4,2.1 316.8,27.2 319.0,1.1 319.8,2.1 323.1,27.2 325.5,1.2 325.9,0.6 329.3,27.8 332.4,1.3 332.7,0.9 336.1,26.3 339.3,2.4 339.8,3.3 342.1,27.0 344.3,1.2 344.4,0.8 346.5,26.1 350.0,1.6 350.8,2.0 353.8,27.3 357.3,2.8 357.9,2.9 360.9,27.4 363.7,2.0 363.9,2.7 366.6,26.1 368.8,2.7 369.1,2.5 372.1,27.7 374.5,1.8 374.9,0.8 378.2,26.0 381.7,1.3 381.9,2.0 385.2,26.5 387.9,2.0 388.6,1.3 391.8,28.0 394.8,2.8 395.6,2.6 398.8,27.7 401.7,1.2 402.2,2.0 404.6,27.3 408.0,2.2 408.1,2.5 410.4,27.7 413.4,1.6 414.1,1.9 416.6,27.7 419.9,2.8 420.6,3.1 423.7,27.2 426.4,3.0 426.8,2.1 429.8,27.0 432.6,2.2 432.9,1.6 434.9,27.6 438.3,2.4 438.5,3.4 441.7,27.0 443.6,2.7 444.2,2.9 446.1,27.5 448.1,2.0 448.3,1.7 451.6,27.5 454.8,1.6 455.2,1.8 457.2,26.8 460.7,2.5 461.4,2.1 464.4,27.6 467.4,1.9 467.7,0.9 471.0,27.9 473.3,2.5 473.7,2.8 477.0,26.6 479.9,1.5 480.4,0.6 482.7,26.6 486.1,1.3 486.7,0.4 490.2,26.3 492.2,1.4 493.0,1.8 496.3,27.0 498.4,1.7 498.8,2.7 501.0,26.5 504.3,1.2 505.0,0.8 507.9,27.3 511.2,1.2 511.9,0.5 515.0,26.1 518.1,1.4 518.4,0.4 520.8,26.7 524.3,2.2 524.7,3.2 526.8,26.4 530.3,2.9 530.9,3.9 532.9,27.8 535.9,2.3 536.6,1.5 538.8,26.3 541.5,2.1 542.0,1.8 545.1,27.7 548.2,1.1 548.4,0.5 550.7,27.1 552.9,2.2 553.3,2.0 556.3,27.9 558.5,1.7 559.3,1.1 561.2,26.4 564.5,2.5 565.2,2.5 567.2,26.6 570.2,1.8 570.5,1.5 573.1,26.7 575.7,1.3 575.9,1.8 579.0,26.8 581.1,1.6 581.6,2.4 584.2,27.9 587.0,1.4 587.5,1.6 590.4,27.4 592.3,1.9 593.0,1.2 594.9,26.4 597.3,1.9 597.7,2.1 599.8,26.7 602.8,2.1 603.6,3.0 605.9,26.7 608.6,2.1 609.0,2.8 611.2,26.9 613.3,2.8 613.9,3.7 616.0,27.4 618.8,1.1 619.5,1.9 621.5,27.9 624.7,2.2 625.2,1.7 627.2,27.0 630.5,1.4 630.9,1.0 634.0,27.9 637.3,1.6 637.7,0.6 640.5,27.7 643.7,1.1 644.1,0.3 646.7,27.8 649.1,2.7 649.8,3.3 652.1,27.8 655.4,3.0 655.6,2.0 658.0,27.0 660.5,1.2 661.1,1.5 664.0,27.0 666.8,2.4 667.0,2.3 669.1,26.2 672.2,1.6 672.6,1.2 675.4,26.2 678.4,1.1 679.1,0.5 682.3,27.1 684.8,1.6 685.2,2.1 688.0,27.1 690.3,2.2 690.5,2.2 693.5,27.1 696.3,2.1 696.6,3.1 699.6,27.5 703.0,1.9 703.4,1.5 705.8,26.6 708.2,1.4 708.6,1.0 711.1,27.3 713.5,2.7 714.2,2.4 717.4,26.4 719.5,3.0 719.7,2.0 723.0,26.0 725.9,2.1 726.2,1.6 729.7,26.8 731.9,1.9 732.6,1.5 734.6,27.6 736.6,1.1 736.8,2.1 739.4,27.5 742.2,2.9 742.6,2.6 745.6,26.0 748.0,2.5 748.6,2.5 752.0,26.9 755.0,1.8 755.2,1.6 757.5,26.1 759.8,1.3 760.3,1.7 763.4,27.8 765.8,2.3 766.5,2.1 769.9,26.2 773.3,2.8 774.1,3.4 777.1,26.9 780.2,2.8 780.7,3.0 784.1,26.6 786.5,1.1 787.2,1.3 790.2,26.5 792.4,2.0 793.1,1.7 795.7,26.8 798.9,1.2 799.7,0.3 802.7,27.5 805.3,2.5 805.7,1.8 808.1,26.5 811.2,2.1 811.8,3.1 814.9,27.6 818.4,2.9 819.0,2.6 821.7,27.5 824.9,2.8 825.5,3.1 827.8,27.2" fill="none" stroke="#ff7a45" stroke-width="1.1" opacity="0.8"/><polyline points="0.0,3.2 0.6,3.8 5.3,27.5 10.0,2.1 10.4,2.9 14.4,27.8 17.3,2.9 17.6,3.0 21.5,26.0 24.5,2.6 25.3,3.1 28.2,27.6 31.1,3.2 31.3,2.2 35.9,26.4 38.9,4.0 39.7,3.5 44.4,27.1 48.5,2.4 49.2,2.8 54.0,27.8 57.2,2.7 57.5,2.0 60.2,26.6 64.1,2.0 64.7,1.7 68.0,27.6 71.7,2.6 72.1,3.0 74.8,28.0 77.5,3.5 78.2,2.5 82.5,26.7 86.4,2.0 86.6,1.4 91.3,26.4 95.6,3.9 96.3,3.5 99.7,27.0 104.0,2.2 104.6,2.8 109.1,26.1 113.8,2.2 114.2,2.4 118.8,26.7 123.5,3.1 123.8,2.7 126.8,26.2 129.7,3.4 130.5,2.7 133.2,28.0 137.0,2.8 137.3,3.0 141.7,26.9 145.3,2.1 146.0,1.2 149.7,27.7 152.6,3.5 153.3,3.7 157.7,26.2 161.2,2.3 161.9,1.9 165.5,28.0 170.0,4.0 170.5,3.9 174.7,27.0 177.9,2.8 178.1,2.6 182.9,27.9 186.9,3.0 187.3,2.2 190.5,27.6 195.0,2.7 195.7,3.3 199.8,27.3 204.1,2.7 204.7,2.3 208.3,27.5 212.5,2.6 213.2,2.9 217.1,26.0 220.9,2.5 221.5,2.4 225.9,27.3 230.3,2.7 230.8,3.2 235.3,26.7 239.7,3.7 240.3,4.7 245.0,27.0 248.8,2.3 249.5,3.2 253.1,27.4 257.3,3.5 257.6,4.0 261.5,27.3 265.0,3.2 265.6,3.5 269.8,26.1 272.8,2.9 273.4,2.3 277.5,27.3 280.1,2.9 280.4,2.1 283.3,26.6 286.3,2.4 286.5,2.3 289.9,27.2 293.8,2.5 294.6,1.5 298.1,26.6 301.6,2.2 302.2,2.0 304.9,27.2 307.7,3.1 308.1,3.3 312.8,27.6 316.3,3.6 316.9,3.4 319.8,27.2 323.6,3.9 324.4,4.1 327.8,27.8 330.4,2.2 330.9,2.4 333.8,27.3 338.4,2.8 338.8,2.2 342.0,27.9 345.5,3.9 346.2,4.1 349.4,28.0 353.1,2.8 353.4,3.8 357.1,26.6 360.8,2.2 361.3,2.1 364.6,27.6 369.0,2.0 369.5,1.6 374.1,27.6 377.3,2.5 377.5,3.5 380.8,27.2 384.4,3.3 385.0,3.8 387.8,27.5 391.1,3.1 391.4,2.7 395.2,26.9 398.6,3.5 399.1,2.6 402.3,26.9 406.9,3.8 407.4,2.8 411.7,26.9 415.6,3.4 416.2,3.4 420.8,26.8 424.2,3.7 424.5,3.3 428.9,26.1 433.4,3.4 433.8,3.0 438.1,27.8 441.0,3.0 441.6,3.0 444.9,26.3 448.8,3.6 449.0,3.1 453.4,27.6 457.4,2.1 458.1,3.0 462.9,27.4 465.6,3.7 465.9,4.0 470.6,27.4 473.4,2.6 474.2,1.9 478.1,26.8 481.1,3.2 481.3,2.5 484.7,26.1 487.4,3.2 488.0,3.9 490.9,26.9 494.2,3.2 494.7,4.1 498.1,26.1 502.3,2.3 502.8,2.3 507.4,27.1 511.4,2.5 511.9,2.0 516.2,27.0 519.0,2.5 519.4,2.9 522.4,27.4 526.5,2.2 527.1,1.4 529.9,27.2 533.0,3.8 533.5,3.4 537.9,26.1 542.1,2.1 542.3,3.0 546.4,26.4 549.3,3.9 549.8,4.6 552.7,27.2 556.1,2.5 556.5,2.7 559.8,26.8 562.7,3.7 563.3,4.3 566.9,27.7 570.6,3.2 571.1,3.7 574.6,26.2 577.3,2.4 577.4,3.2 581.1,27.5 583.7,2.9 584.4,3.2 587.9,26.9 590.8,2.3 591.0,2.1 594.5,27.8 597.4,2.5 597.7,1.8 600.9,26.5 604.6,2.1 605.4,1.8 610.0,27.4 614.1,2.9 614.9,2.2 619.0,26.6 623.0,3.5 623.3,2.9 625.9,26.5 628.7,2.8 629.5,2.5 632.8,26.9 636.0,3.5 636.6,2.8 639.7,27.3 644.4,3.3 644.8,4.2 647.4,26.1 651.8,2.8 651.9,2.9 656.7,27.0 660.1,2.2 660.3,3.0 664.0,27.9 666.7,2.5 666.9,2.3 669.6,26.5 673.1,2.6 673.3,1.7 678.0,26.4 681.7,2.8 682.2,2.0 685.5,26.2 689.3,3.8 689.8,4.6 692.9,26.0 696.7,3.0 697.2,2.7 701.2,27.5 705.8,2.6 706.3,3.3 709.3,26.2 712.6,2.2 713.3,2.8 716.6,26.3 719.3,2.5 719.5,2.3 723.4,26.5 726.1,3.4 726.3,2.8 729.5,26.7 732.4,2.8 732.7,3.3 736.5,27.8 740.6,3.5 741.1,3.4 745.5,27.3 750.2,3.5 750.8,3.0 755.2,26.8 758.1,2.1 758.3,1.7 762.4,26.6 765.2,3.5 765.7,2.6 768.4,26.3 771.8,3.7 772.5,3.9 775.6,26.9 779.0,2.7 779.2,2.8 783.6,27.5 786.4,3.1 786.7,3.5 790.3,27.9 794.6,2.2 795.0,3.1 798.6,26.9 802.2,3.5 802.9,3.6 807.7,27.2 810.5,3.6 810.9,2.7 815.7,26.1 819.5,3.0 820.3,2.7 823.3,26.6 826.4,3.1 826.7,3.6" fill="none" stroke="#e8709a" stroke-width="0.7" opacity="0.55"/><path d="M0.5 29.4V0.6H2.6V29.4H3.5V0.6H11.0V29.4H11.8V0.6H14.3V29.4H15.2V0.6H17.6V29.4H20.0V0.6H22.0V29.4H22.9V0.6H24.8V29.4H25.7V0.6H28.1V29.4H28.8V0.6H31.3V29.4H32.2V0.6H34.3V29.4H35.1V0.6H40.1V29.4H40.9V0.6H42.8V29.4H43.7V0.6H46.0V29.4H46.8V0.6H48.8V29.4H49.4V0.6H51.3V29.4H52.1V0.6H54.2V29.4H55.1V0.6H57.3V29.4H58.1V0.6H60.1V29.4H60.9V0.6H62.9V29.4H65.9V0.6H68.3V29.4H70.5V0.6H72.4V29.4H73.3V0.6H75.6V29.4H76.3V0.6H78.6V29.4H79.3V0.6H81.6V29.4H82.5V0.6H84.6V29.4H85.4V0.6H87.3V29.4H88.0V0.6H89.9V29.4H90.8V0.6H93.1V29.4H93.9V0.6H96.0V29.4H98.4V0.6H100.8V29.4H101.6V0.6H104.0V29.4H104.7V0.6H106.7V29.4H109.6V0.6H111.6V29.4H112.2V0.6H114.5V29.4H116.8V0.6H119.1V29.4H119.7V0.6H122.0V29.4H122.8V0.6H125.1V29.4H126.1V0.6H128.4V29.4H129.3V0.6H131.3V29.4H132.0V0.6H134.3V29.4H135.2V0.6H137.1V29.4H137.9V0.6H140.0V29.4H140.8V0.6H143.0V29.4H145.0V0.6H147.4V29.4H148.2V0.6H150.7V29.4H151.5V0.6H153.6V29.4H154.4V0.6H156.8V29.4H157.5V0.6H159.5V29.4H160.2V0.6H162.2V29.4H163.1V0.6H165.5V29.4H166.3V0.6H168.6V29.4H169.2V0.6H171.5V29.4H172.1V0.6H174.3V29.4H174.9V0.6H177.0V29.4H177.6V0.6H179.9V29.4H182.9V0.6H184.8V29.4H185.5V0.6H187.5V29.4H188.2V0.6H190.6V29.4H193.0V0.6H195.2V29.4H195.9V0.6H198.0V29.4H198.7V0.6H200.9V29.4H202.9V0.6H205.3V29.4H206.0V0.6H208.3V29.4H208.9V0.6H211.0V29.4H211.9V0.6H214.3V29.4H217.2V0.6H219.7V29.4H220.4V0.6H222.7V29.4H223.4V0.6H225.5V29.4H226.2V0.6H228.5V29.4H229.2V0.6H231.4V29.4H232.0V0.6H234.1V29.4H234.9V0.6H237.2V29.4H237.9V0.6H240.3V29.4H243.0V0.6H245.2V29.4H245.8V0.6H248.0V29.4H250.3V0.6H252.6V29.4H253.4V0.6H255.6V29.4H256.2V0.6H258.2V29.4H258.8V0.6H261.2V29.4H263.9V0.6H266.3V29.4H266.9V0.6H269.1V29.4H269.8V0.6H271.8V29.4H272.7V0.6H274.6V29.4H275.2V0.6H277.6V29.4H278.5V0.6H280.6V29.4H281.3V0.6H283.4V29.4H284.2V0.6H286.5V29.4H287.4V0.6H291.6V29.4H292.6V0.6H294.7V29.4H295.6V0.6H297.8V29.4H298.6V0.6H300.6V29.4H301.2V0.6H303.3V29.4H304.0V0.6H306.4V29.4H307.3V0.6H309.3V29.4H310.1V0.6H312.1V29.4H312.9V0.6H315.2V29.4H316.1V0.6H318.1V29.4H320.1V0.6H322.4V29.4H325.0V0.6H327.4V29.4H328.1V0.6H332.3V29.4H333.2V0.6H337.4V29.4H338.4V0.6H340.6V29.4H341.6V0.6H343.9V29.4H346.4V0.6H348.3V29.4H350.5V0.6H352.8V29.4H353.7V0.6H355.9V29.4H356.6V0.6H358.9V29.4H359.7V0.6H362.1V29.4H362.8V0.6H364.8V29.4H367.0V0.6H369.0V29.4H369.6V0.6H371.8V29.4H372.7V0.6H374.9V29.4H375.8V0.6H378.3V29.4H378.9V0.6H381.4V29.4H382.1V0.6H384.5V29.4H385.3V0.6H387.3V29.4H387.9V0.6H390.1V29.4H390.8V0.6H393.1V29.4H393.8V0.6H396.1V29.4H396.8V0.6H399.3V29.4H400.1V0.6H405.1V29.4H406.0V0.6H408.0V29.4H408.6V0.6H410.8V29.4H413.0V0.6H415.3V29.4H416.1V0.6H421.1V29.4H421.8V0.6H424.0V29.4H426.5V0.6H428.6V29.4H429.3V0.6H431.2V29.4H431.9V0.6H434.2V29.4H437.2V0.6H444.7V29.4H445.3V0.6H447.7V29.4H448.5V0.6H450.7V29.4H451.5V0.6H453.8V29.4H454.6V0.6H456.9V29.4H457.5V0.6H459.9V29.4H460.5V0.6H462.7V29.4H463.4V0.6H465.7V29.4H466.6V0.6H468.6V29.4H469.4V0.6H476.9V29.4H477.8V0.6H479.7V29.4H482.2V0.6H484.4V29.4H485.1V0.6H487.1V29.4H489.8V0.6H492.0V29.4H494.3V0.6H496.8V29.4H499.0V0.6H501.3V29.4H501.9V0.6H504.1V29.4H504.8V0.6H509.0V29.4H509.9V0.6H511.8V29.4H512.7V0.6H514.6V29.4H517.3V0.6H519.3V29.4H520.0V0.6H522.0V29.4H524.2V0.6H526.2V29.4H527.1V0.6H529.1V29.4H529.8V0.6H532.1V29.4H532.8V0.6H534.9V29.4H535.7V0.6H538.0V29.4H538.7V0.6H540.7V29.4H541.4V0.6H543.5V29.4H544.4V0.6H546.7V29.4H547.3V0.6H554.8V29.4H555.5V0.6H557.7V29.4H560.6V0.6H562.7V29.4H563.3V0.6H567.5V29.4H568.2V0.6H570.2V29.4H570.8V0.6H573.1V29.4H573.7V0.6H575.7V29.4H576.6V0.6H578.8V29.4H579.5V0.6H581.4V29.4H582.1V0.6H584.6V29.4H585.4V0.6H587.3V29.4H588.2V0.6H590.4V29.4H591.3V0.6H593.3V29.4H594.0V0.6H595.9V29.4H596.6V0.6H601.6V29.4H602.5V0.6H604.9V29.4H605.6V0.6H607.7V29.4H608.5V0.6H610.8V29.4H611.4V0.6H613.5V29.4H614.3V0.6H616.6V29.4H617.3V0.6H619.7V29.4H620.4V0.6H625.4V29.4H626.3V0.6H628.6V29.4H631.5V0.6H633.5V29.4H634.3V0.6H636.4V29.4H637.1V0.6H639.4V29.4H640.2V0.6H642.5V29.4H643.3V0.6H645.8V29.4H646.6V0.6H648.7V29.4H649.5V0.6H651.6V29.4H652.4V0.6H654.8V29.4H655.5V0.6H657.5V29.4H658.2V0.6H660.7V29.4H661.5V0.6H663.7V29.4H664.4V0.6H668.6V29.4H670.9V0.6H673.4V29.4H674.1V0.6H676.4V29.4H677.2V0.6H682.2V29.4H683.1V0.6H685.0V29.4H685.7V0.6H687.8V29.4H690.2V0.6H692.1V29.4H692.9V0.6H694.8V29.4H695.5V0.6H700.5V29.4H702.9V0.6H707.9V29.4H708.7V0.6H711.0V29.4H711.9V0.6H714.0V29.4H716.1V0.6H718.0V29.4H718.8V0.6H721.0V29.4H721.8V0.6H724.3V29.4H726.6V0.6H729.1V29.4H730.0V0.6H732.1V29.4H732.8V0.6H735.3V29.4H736.1V0.6H738.3V29.4H739.0V0.6H743.2V29.4H743.9V0.6H745.8V29.4H746.7V0.6H749.0V29.4H749.8V0.6H752.2V29.4H752.9V0.6H754.8V29.4H757.7V0.6H760.1V29.4H760.9V0.6H763.4V29.4H764.0V0.6H769.0V29.4H769.9V0.6H772.0V29.4H772.7V0.6H774.6V29.4H775.4V0.6H777.3V29.4H778.0V0.6H780.2V29.4H781.0V0.6H783.3V29.4H784.2V0.6H786.7V29.4H787.4V0.6H789.7V29.4H790.6V0.6H798.1V29.4H798.7V0.6H806.2V29.4H806.9V0.6H809.4V29.4H810.3V0.6H812.4V29.4H813.2V0.6H815.7V29.4H818.7V0.6H820.8V29.4H821.4V0.6H823.7V29.4H826.6V0.6" fill="none" stroke="#6aa84f" stroke-width="0.75" opacity="0.9"/><path d="M0.5 0.6H828.5" stroke="#6aa84f" stroke-width="0.9"/><path d="M0.5 29.4H828.5" stroke="#6aa84f" stroke-width="0.9" stroke-dasharray="2.6 3.1 1.8 2.4 4 3.3" opacity="0.9"/></svg>
<div class="a" style="left:1319.2px;top:729.4px;width:2.2px;height:42.2px;background:#1c1c1c"></div>
<div class="a" style="left:1317.2px;top:737px;width:4.6px;height:17.6px;background:#222;border-radius:1px"></div>
<div class="a" style="left:1318.2px;top:763px;width:3px;height:6px;background:#9a9a9a"></div>
<svg class="a" style="left:492.5px;top:773.2px;" width="831" height="6" viewBox="0 0 831 6"><path d="M0.4 0.8H830" stroke="#707070" stroke-width="1.6"/><path d="M0.5 0V5M829.5 0V5M47.8 0V5M182.5 0V5M322.5 0V5M457.3 0V5M597.0 0V5M736.3 0V5" stroke="#555" stroke-width="1"/></svg>
<span id="t75" class="t" style="left:540.30px;transform:translateX(-50%);top:780.00px;font-size:10px;line-height:10px;font-weight:400;color:#333;letter-spacing:-1.048px;">Sep</span>
<span id="t76" class="t" style="left:675.00px;transform:translateX(-50%);top:780.00px;font-size:10px;line-height:10px;font-weight:400;color:#333;letter-spacing:-0.031px;">Oct</span>
<span id="t77" class="t" style="left:815.00px;transform:translateX(-50%);top:780.00px;font-size:10px;line-height:10px;font-weight:400;color:#333;letter-spacing:-0.398px;">Nov</span>
<span id="t78" class="t" style="left:949.80px;transform:translateX(-50%);top:780.00px;font-size:10px;line-height:10px;font-weight:400;color:#333;letter-spacing:-0.648px;">Dec</span>
<span id="t79" class="t" style="left:1089.50px;transform:translateX(-50%);top:780.00px;font-size:10px;line-height:10px;font-weight:400;color:#333;letter-spacing:0.083px;">2022</span>
<span id="t80" class="t" style="left:1228.80px;transform:translateX(-50%);top:780.00px;font-size:10px;line-height:10px;font-weight:400;color:#333;letter-spacing:-0.867px;">Feb</span>
<div class="a" style="left:493.3px;top:798.3px;width:243.6px;height:23.4px;background:#fff;border:1px solid #dcdcdc;border-radius:3px;"></div>
<div class="a" style="left:633.6px;top:799.3px;width:35px;height:21.4px;background:#f0f5fb"></div>
<div class="a" style="left:526.4px;top:799.3px;width:1px;height:21.4px;background:#dcdcdc"></div>
<div class="a" style="left:562.7px;top:799.3px;width:1px;height:21.4px;background:#dcdcdc"></div>
<div class="a" style="left:597.4px;top:799.3px;width:1px;height:21.4px;background:#dcdcdc"></div>
<div class="a" style="left:632.6px;top:799.3px;width:1px;height:21.4px;background:#dcdcdc"></div>
<div class="a" style="left:668.1px;top:799.3px;width:1px;height:21.4px;background:#dcdcdc"></div>
<div class="a" style="left:700.1px;top:799.3px;width:1px;height:21.4px;background:#dcdcdc"></div>
<span id="t81" class="t" style="left:502.30px;top:805.00px;font-size:12.5px;line-height:13px;font-weight:400;color:#333;letter-spacing:-0.284px;">1D</span>
<span id="t82" class="t" style="left:535.90px;top:805.00px;font-size:12.5px;line-height:13px;font-weight:400;color:#333;letter-spacing:-0.850px;">1W</span>
<span id="t83" class="t" style="left:572.30px;top:805.00px;font-size:12.5px;line-height:13px;font-weight:400;color:#333;letter-spacing:-0.075px;">1M</span>
<span id="t84" class="t" style="left:606.70px;top:805.00px;font-size:12.5px;line-height:13px;font-weight:400;color:#333;letter-spacing:0.525px;">3M</span>
<span id="t85" class="t" style="left:641.90px;top:805.00px;font-size:12.5px;line-height:13px;font-weight:400;color:#1a5cb8;letter-spacing:0.525px;">6M</span>
<span id="t86" class="t" style="left:677.20px;top:805.00px;font-size:12.5px;line-height:13px;font-weight:400;color:#333;letter-spacing:-0.997px;">1Y</span>
<span id="t87" class="t" style="left:708.60px;top:805.00px;font-size:12.5px;line-height:13px;font-weight:400;color:#333;letter-spacing:-1.075px;">ALL</span>
<div class="a" style="left:754px;top:798.3px;width:103.2px;height:23.4px;background:#fff;border:1px solid #dcdcdc;border-radius:3px;"></div>
<div class="a" style="left:833.6px;top:799.3px;width:1px;height:21.4px;background:#dcdcdc"></div>
<span id="t88" class="t" style="left:763.10px;top:805.00px;font-size:12.5px;line-height:13px;font-weight:400;color:#333;letter-spacing:-0.887px;">CUSTOM</span>
<svg class="a" style="left:820.1px;top:807.8px;" width="7.2" height="4.2" viewBox="0 0 7.2 4.2"><path d="M0 4.2H7.2L3.6 0Z" fill="#9a9a9a"/></svg>
<svg class="a" style="left:840.4px;top:806.3px;" width="11" height="9.4" viewBox="0 0 11 9.4"><rect x="0.6" y="0.6" width="9.8" height="8.2" rx="0.8" fill="none" stroke="#444" stroke-width="1"/><path d="M2.6 3.6V2.6H3.8M7.2 2.6H8.4V3.6M8.4 5.8V6.8H7.2M3.8 6.8H2.6V5.8" fill="none" stroke="#444" stroke-width="0.8"/></svg>
<svg class="a" style="left:110px;top:500px;" width="318" height="42" viewBox="0 0 318 42"><rect x="2.2" y="2.2" width="313.6" height="37.2" fill="none" stroke="#6600f2" stroke-width="1.9" stroke-dasharray="7.4 4.1"/></svg>
<svg class="a" style="left:250px;top:360px;" width="70" height="140" viewBox="0 0 70 140"><path d="M54.5 8L18.2 129.8" stroke="#6600f2" stroke-width="1.9" fill="none"/><path d="M13.6 121.4L18 130.6L27 126.4" stroke="#6600f2" stroke-width="1.9" fill="none" stroke-linejoin="miter"/></svg>
<div class="a" style="left:234.2px;top:336.2px;width:148px;height:32px;background:#6600f2;border-radius:5px"></div>
<span id="t89" class="t" style="left:263.75px;top:345.00px;font-size:16px;line-height:16px;font-weight:700;color:#fff;letter-spacing:-0.829px;">Scale setting</span>
<div class="a" style="left:382.2px;top:336.2px;width:90.5px;height:32px;background:#fff;border:2px solid #6600f2;border-radius:5px"></div>
<span id="t90" class="t" style="left:409.50px;top:345.00px;font-size:16px;line-height:16px;font-weight:700;color:#6600f2;letter-spacing:-0.479px;">Auto</span>
</div></div>
</body></html>
